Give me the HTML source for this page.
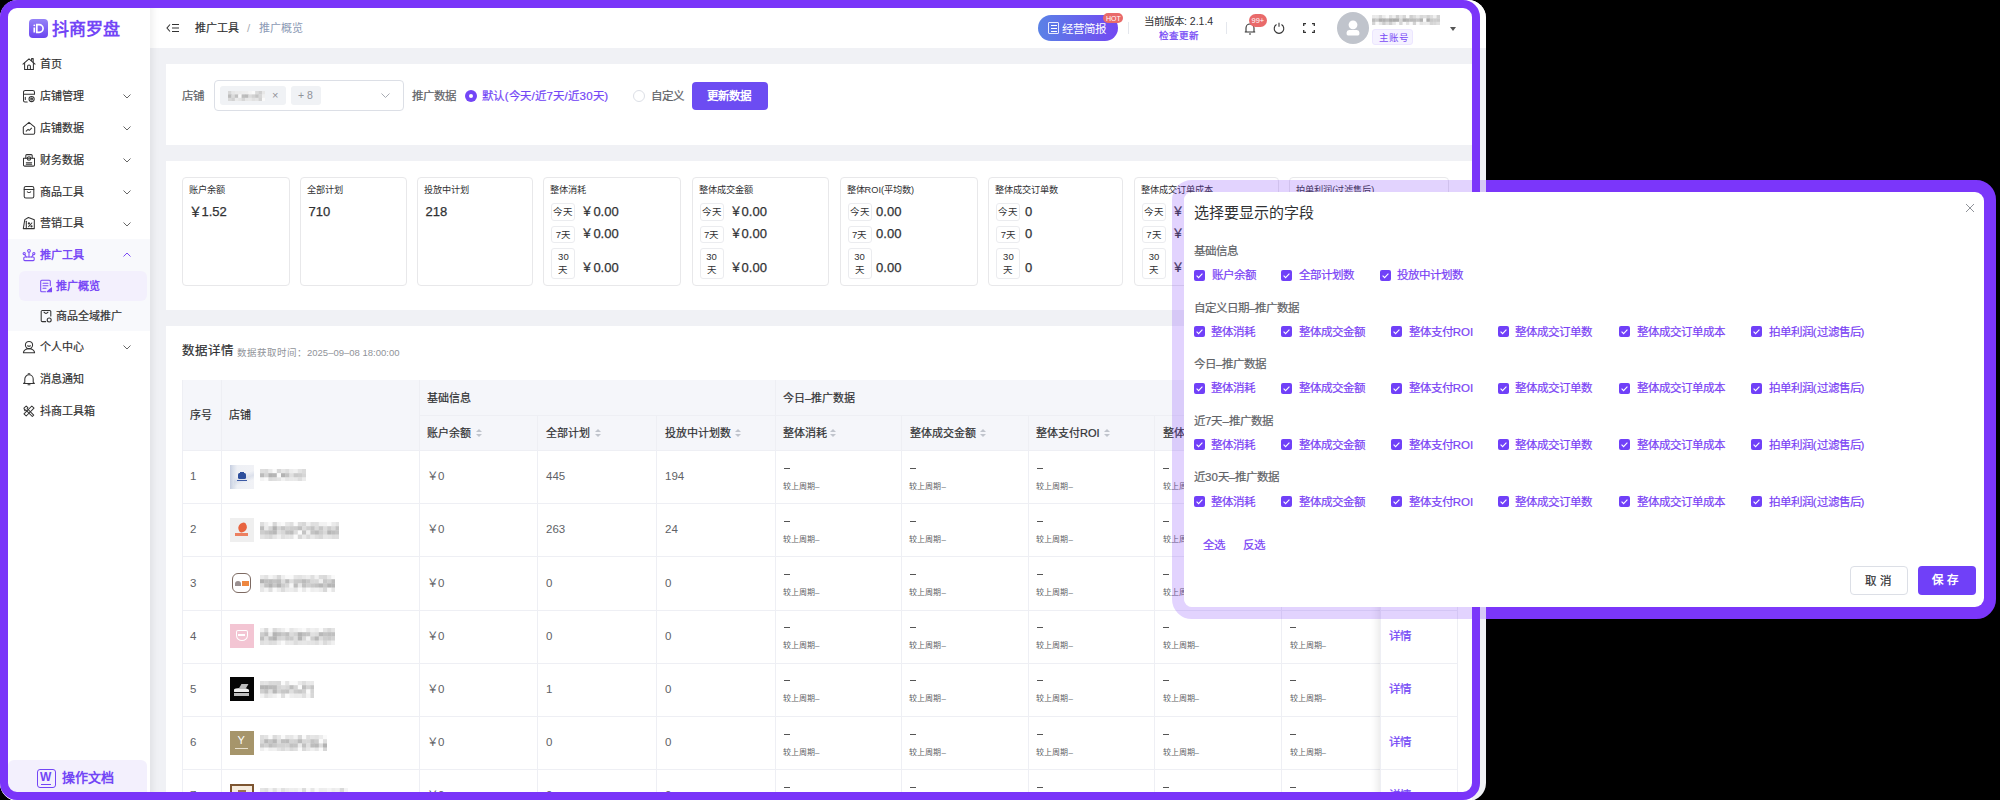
<!DOCTYPE html>
<html lang="zh-CN">
<head>
<meta charset="utf-8">
<style>
*{box-sizing:border-box;margin:0;padding:0}
html,body{width:2000px;height:800px;overflow:hidden;background:#000}
body{font-family:"Liberation Sans",sans-serif;color:#303133;font-size:12px;position:relative}
.m{-webkit-text-stroke:0.2px currentColor}
.abs{position:absolute}
#page{position:absolute;left:0;top:0;width:1486px;height:801px;background:#F0F1F5;border-radius:18px;overflow:hidden}
#side{position:absolute;left:0;top:0;width:150px;height:800px;background:#fff;box-shadow:2px 0 8px rgba(0,0,0,.08)}
#hdr{position:absolute;left:150px;top:0;width:1336px;height:48px;background:#fff}
.card{position:absolute;left:166px;width:1306px;background:#fff}
#frame{position:absolute;left:0;top:0;width:1480px;height:800px;border:8px solid #7A35F9;border-radius:17px;pointer-events:none}
.txt{position:absolute;white-space:nowrap;line-height:1}
svg{display:block}
.tb{position:absolute;left:16px;top:54px;width:1276px;height:460px;overflow:hidden}
.hd{position:absolute;background:#F5F6FA}
.vl{position:absolute;width:1px;background:#EEEFF4}
.hl{position:absolute;height:1px;background:#EEEFF4}
.th{position:absolute;font-size:11px;line-height:12px;color:#303133;-webkit-text-stroke:0.2px currentColor;white-space:nowrap}
.td{position:absolute;font-size:11.5px;line-height:12px;color:#606266;white-space:nowrap}
.dash{position:absolute;width:6px;height:1px;background:#555}
.sub{position:absolute;font-size:8px;line-height:9px;color:#606266;white-space:nowrap}
.sort{position:absolute;width:6px;height:9px}
.sort:before{content:"";position:absolute;left:0;top:0;border-left:3px solid transparent;border-right:3px solid transparent;border-bottom:3.5px solid #C0C4CC}
.sort:after{content:"";position:absolute;left:0;top:5px;border-left:3px solid transparent;border-right:3px solid transparent;border-top:3.5px solid #C0C4CC}

.box{position:absolute;top:16px;height:109px;border:1px solid #E8E8EA;border-radius:4px}
.bt{position:absolute;left:6px;top:7px;font-size:9.2px;line-height:10px;color:#303133;white-space:nowrap}
.yen{display:inline-block;width:10px;margin-right:2px;font-size:12px}
.tag{position:absolute;left:7px;width:24px;border:1px solid #EBECEF;border-radius:3px;font-size:9.5px;color:#303133;text-align:center}
.val{position:absolute;font-size:13px;line-height:14px;color:#303133;white-space:nowrap;-webkit-text-stroke:0.25px currentColor}
</style>
</head>
<body>
<div id="page">
  <div id="hdr"><div class="abs" style="left:16px;top:22px;width:14px;height:12px"><svg width="14" height="12" viewBox="0 0 14 12" fill="none" stroke="#333" stroke-width="1.1"><path d="M4 2.5L1 6l3 3.5M6 2.5h7M6 6h7M6 9.5h7"/></svg></div>
<div class="txt" style="left:45px;top:22.5px;font-size:11px;line-height:11px;color:#303133;-webkit-text-stroke:0.2px currentColor">推广工具</div>
<div class="txt" style="left:97px;top:22px;font-size:11.5px;line-height:12px;color:#A8ABB2">/</div>
<div class="txt" style="left:109px;top:22.5px;font-size:11px;line-height:11px;color:#8C9AB5">推广概览</div>
<div class="abs" style="left:888px;top:15px;width:80px;height:26px;border-radius:13px;background:linear-gradient(90deg,#5A82E6,#7348F2)"></div>
<div class="abs" style="left:898px;top:22px;width:11px;height:12px;border:1.2px solid rgba(255,255,255,.85);border-radius:1px"><div class="abs" style="left:1.5px;top:2px;width:6px;height:1px;background:#fff"></div><div class="abs" style="left:1.5px;top:5px;width:6px;height:1px;background:#fff"></div><div class="abs" style="left:1.5px;top:8px;width:6px;height:1px;background:#fff"></div></div>
<div class="txt" style="left:912px;top:22.5px;font-size:11.5px;line-height:12px;color:#fff">经营简报</div>
<div class="abs" style="left:953px;top:13px;width:20px;height:10px;border-radius:5px;background:#E96A6A"><div class="txt" style="left:3px;top:1.5px;font-size:7px;line-height:7px;color:#fff">HOT</div></div>
<div class="abs" style="left:978px;top:22px;width:1px;height:12px;background:#E4E7ED"></div>
<div class="txt" style="left:994px;top:15.5px;font-size:10.5px;line-height:11px;color:#303133">当前版本: 2.1.4</div>
<div class="txt" style="left:1009px;top:30.5px;font-size:9.5px;line-height:10px;color:#7346F6;-webkit-text-stroke:0.25px currentColor">检查更新</div>
<div class="abs" style="left:1076px;top:22px;width:1px;height:12px;background:#E4E7ED"></div>
<div class="abs" style="left:1094px;top:22px;width:12px;height:13px"><svg width="12" height="13" viewBox="0 0 12 13" fill="none" stroke="#333" stroke-width="1.1"><path d="M2 10V6a4 4 0 0 1 8 0v4M.8 10h10.4M5 12h2"/></svg></div>
<div class="abs" style="left:1099px;top:14px;width:18px;height:13px;border-radius:7px;background:#E96A6A"><div class="txt" style="left:2.5px;top:3px;font-size:7.5px;line-height:7.5px;color:#fff">99+</div></div>
<div class="abs" style="left:1123px;top:22px;width:12px;height:12px"><svg width="12" height="12" viewBox="0 0 12 12" fill="none" stroke="#333" stroke-width="1.1"><path d="M3.5 2.5a4.8 4.8 0 1 0 5 0M6 .8v4"/></svg></div>
<div class="abs" style="left:1153px;top:23px;width:12px;height:10px"><svg width="12" height="10" viewBox="0 0 12 10" fill="none" stroke="#333" stroke-width="1.3"><path d="M.7 3V.7H3M9 .7h2.3V3M11.3 7v2.3H9M3 9.3H.7V7"/></svg></div>
<div class="abs" style="left:1187px;top:11.5px;width:32px;height:32px;border-radius:50%;background:#C0C4CC"><svg width="32" height="32" viewBox="0 0 32 32" fill="#fff"><circle cx="16" cy="12.8" r="4.4"/><path d="M9.6 20.5a2.6 2.6 0 0 1 2.6-2.5h7.6a2.6 2.6 0 0 1 2.6 2.5v1.6a1.4 1.4 0 0 1-1.4 1.4H11a1.4 1.4 0 0 1-1.4-1.4z"/></svg></div>
<svg class="abs" style="left:1222.0px;top:14.5px;" width="68.0" height="10.2" viewBox="0 0 68.0 10.2"><rect x="0.0" y="0.0" width="3.7" height="3.7" fill="rgb(233,233,233)"/><rect x="3.4" y="0.0" width="3.7" height="3.7" fill="rgb(234,234,234)"/><rect x="6.8" y="0.0" width="3.7" height="3.7" fill="rgb(217,217,217)"/><rect x="10.2" y="0.0" width="3.7" height="3.7" fill="rgb(237,237,237)"/><rect x="13.6" y="0.0" width="3.7" height="3.7" fill="rgb(250,250,250)"/><rect x="17.0" y="0.0" width="3.7" height="3.7" fill="rgb(224,224,224)"/><rect x="20.4" y="0.0" width="3.7" height="3.7" fill="rgb(239,239,239)"/><rect x="23.8" y="0.0" width="3.7" height="3.7" fill="rgb(207,207,207)"/><rect x="27.2" y="0.0" width="3.7" height="3.7" fill="rgb(230,230,230)"/><rect x="30.6" y="0.0" width="3.7" height="3.7" fill="rgb(215,215,215)"/><rect x="34.0" y="0.0" width="3.7" height="3.7" fill="rgb(250,250,250)"/><rect x="37.4" y="0.0" width="3.7" height="3.7" fill="rgb(207,207,207)"/><rect x="40.8" y="0.0" width="3.7" height="3.7" fill="rgb(220,220,220)"/><rect x="44.2" y="0.0" width="3.7" height="3.7" fill="rgb(234,234,234)"/><rect x="47.6" y="0.0" width="3.7" height="3.7" fill="rgb(217,217,217)"/><rect x="51.0" y="0.0" width="3.7" height="3.7" fill="rgb(223,223,223)"/><rect x="54.4" y="0.0" width="3.7" height="3.7" fill="rgb(210,210,210)"/><rect x="57.8" y="0.0" width="3.7" height="3.7" fill="rgb(222,222,222)"/><rect x="61.2" y="0.0" width="3.7" height="3.7" fill="rgb(240,240,240)"/><rect x="64.6" y="0.0" width="3.7" height="3.7" fill="rgb(210,210,210)"/><rect x="0.0" y="3.4" width="3.7" height="3.7" fill="rgb(190,190,190)"/><rect x="3.4" y="3.4" width="3.7" height="3.7" fill="rgb(202,202,202)"/><rect x="6.8" y="3.4" width="3.7" height="3.7" fill="rgb(174,174,174)"/><rect x="10.2" y="3.4" width="3.7" height="3.7" fill="rgb(176,176,176)"/><rect x="13.6" y="3.4" width="3.7" height="3.7" fill="rgb(188,188,188)"/><rect x="17.0" y="3.4" width="3.7" height="3.7" fill="rgb(171,171,171)"/><rect x="20.4" y="3.4" width="3.7" height="3.7" fill="rgb(170,170,170)"/><rect x="23.8" y="3.4" width="3.7" height="3.7" fill="rgb(173,173,173)"/><rect x="27.2" y="3.4" width="3.7" height="3.7" fill="rgb(215,215,215)"/><rect x="30.6" y="3.4" width="3.7" height="3.7" fill="rgb(174,174,174)"/><rect x="34.0" y="3.4" width="3.7" height="3.7" fill="rgb(182,182,182)"/><rect x="37.4" y="3.4" width="3.7" height="3.7" fill="rgb(187,187,187)"/><rect x="40.8" y="3.4" width="3.7" height="3.7" fill="rgb(189,189,189)"/><rect x="44.2" y="3.4" width="3.7" height="3.7" fill="rgb(196,196,196)"/><rect x="47.6" y="3.4" width="3.7" height="3.7" fill="rgb(177,177,177)"/><rect x="51.0" y="3.4" width="3.7" height="3.7" fill="rgb(250,250,250)"/><rect x="54.4" y="3.4" width="3.7" height="3.7" fill="rgb(173,173,173)"/><rect x="57.8" y="3.4" width="3.7" height="3.7" fill="rgb(201,201,201)"/><rect x="61.2" y="3.4" width="3.7" height="3.7" fill="rgb(205,205,205)"/><rect x="64.6" y="3.4" width="3.7" height="3.7" fill="rgb(202,202,202)"/><rect x="0.0" y="6.8" width="3.7" height="3.7" fill="rgb(213,213,213)"/><rect x="3.4" y="6.8" width="3.7" height="3.7" fill="rgb(250,250,250)"/><rect x="6.8" y="6.8" width="3.7" height="3.7" fill="rgb(231,231,231)"/><rect x="10.2" y="6.8" width="3.7" height="3.7" fill="rgb(205,205,205)"/><rect x="13.6" y="6.8" width="3.7" height="3.7" fill="rgb(224,224,224)"/><rect x="17.0" y="6.8" width="3.7" height="3.7" fill="rgb(206,206,206)"/><rect x="20.4" y="6.8" width="3.7" height="3.7" fill="rgb(230,230,230)"/><rect x="23.8" y="6.8" width="3.7" height="3.7" fill="rgb(250,250,250)"/><rect x="27.2" y="6.8" width="3.7" height="3.7" fill="rgb(214,214,214)"/><rect x="30.6" y="6.8" width="3.7" height="3.7" fill="rgb(250,250,250)"/><rect x="34.0" y="6.8" width="3.7" height="3.7" fill="rgb(226,226,226)"/><rect x="37.4" y="6.8" width="3.7" height="3.7" fill="rgb(250,250,250)"/><rect x="40.8" y="6.8" width="3.7" height="3.7" fill="rgb(210,210,210)"/><rect x="44.2" y="6.8" width="3.7" height="3.7" fill="rgb(250,250,250)"/><rect x="47.6" y="6.8" width="3.7" height="3.7" fill="rgb(228,228,228)"/><rect x="51.0" y="6.8" width="3.7" height="3.7" fill="rgb(234,234,234)"/><rect x="54.4" y="6.8" width="3.7" height="3.7" fill="rgb(235,235,235)"/><rect x="57.8" y="6.8" width="3.7" height="3.7" fill="rgb(213,213,213)"/><rect x="61.2" y="6.8" width="3.7" height="3.7" fill="rgb(216,216,216)"/><rect x="64.6" y="6.8" width="3.7" height="3.7" fill="rgb(224,224,224)"/></svg>
<div class="abs" style="left:1222px;top:29px;width:41px;height:16px;border-radius:3px;background:#F5F2FF;border:1px solid #ECE6FF"><div class="txt" style="left:5.5px;top:3px;font-size:9.5px;line-height:10px;color:#7A4AF6">主账号</div></div>
<div class="abs" style="left:1300px;top:27px;width:0;height:0;border-left:3.5px solid transparent;border-right:3.5px solid transparent;border-top:4.5px solid #555"></div></div>
  <div id="side"><div class="abs" style="left:0;top:239px;width:150px;height:92px;background:#F8F9FC"></div>
<div class="abs" style="left:19px;top:271px;width:128px;height:30px;background:#F3F0FD;border-radius:6px"></div>
<div class="abs" style="left:29px;top:19px;width:19px;height:19px;border-radius:4px;background:linear-gradient(180deg,#9583F7,#6A44F0)"><svg width="19" height="19" viewBox="0 0 19 19" fill="none" stroke="#fff" stroke-width="1.7"><path d="M5.3 8.6v4.8"/><circle cx="5.3" cy="6.3" r=".9" fill="#fff" stroke="none"/><path d="M7.8 5.6h2.4a3.9 3.9 0 0 1 0 7.8H7.8z"/></svg></div>
<div class="txt" style="left:52px;top:21px;font-size:17px;line-height:17px;font-weight:700;color:#7346F6;letter-spacing:0.1px">抖商罗盘</div>
<div class="abs" style="left:22px;top:56.5px;width:14px;height:14px"><svg width="14" height="14" viewBox="0 0 14 14" fill="none" stroke="#333" color="#333" stroke-width="1.05" stroke-linecap="round" stroke-linejoin="round"><path d="M1 7.2L7 1.8l6 5.4"/><path d="M2.6 5.9v6.6h8.8V5.9"/><path d="M5.6 12.5V9.3a1.4 1.4 0 0 1 2.8 0v3.2"/><path d="M9.6 3.6V1.6h1.6v3.4"/></svg></div><div class="txt" style="left:40px;top:58.5px;font-size:11px;line-height:11px;color:#333;-webkit-text-stroke:0.2px currentColor;">首页</div>
<div class="abs" style="left:22px;top:88.5px;width:14px;height:14px"><svg width="14" height="14" viewBox="0 0 14 14" fill="none" stroke="#333" color="#333" stroke-width="1.05" stroke-linecap="round" stroke-linejoin="round"><path d="M1.5 5.2V3.2a1.8 1.8 0 0 1 1.8-1.8h7.4a1.8 1.8 0 0 1 1.8 1.8v2z"/><path d="M1.5 5.2v6.3a1.5 1.5 0 0 0 1.5 1.5h2.2M3.3 8.2v2.2"/><circle cx="9.6" cy="10" r="2.6"/><circle cx="9.6" cy="10" r="0.9"/></svg></div><div class="txt" style="left:40px;top:90.5px;font-size:11px;line-height:11px;color:#333;-webkit-text-stroke:0.2px currentColor;">店铺管理</div><div class="abs" style="left:123px;top:94px;width:8px;height:5px"><svg width="8" height="5" viewBox="0 0 8 5" fill="none" stroke="#666" stroke-width="1"><path d="M.5 .5L4 4 7.5 .5"/></svg></div>
<div class="abs" style="left:22px;top:120.5px;width:14px;height:14px"><svg width="14" height="14" viewBox="0 0 14 14" fill="none" stroke="#333" color="#333" stroke-width="1.05" stroke-linecap="round" stroke-linejoin="round"><path d="M1.3 6.2L7 1.3l5.7 4.9v5.6a1.4 1.4 0 0 1-1.4 1.4H2.7a1.4 1.4 0 0 1-1.4-1.4z"/><path d="M4.2 10.2l1.9-1.8 1.2 0.9 2.3-2.1"/></svg></div><div class="txt" style="left:40px;top:122.5px;font-size:11px;line-height:11px;color:#333;-webkit-text-stroke:0.2px currentColor;">店铺数据</div><div class="abs" style="left:123px;top:126px;width:8px;height:5px"><svg width="8" height="5" viewBox="0 0 8 5" fill="none" stroke="#666" stroke-width="1"><path d="M.5 .5L4 4 7.5 .5"/></svg></div>
<div class="abs" style="left:22px;top:152.5px;width:14px;height:14px"><svg width="14" height="14" viewBox="0 0 14 14" fill="none" stroke="#333" color="#333" stroke-width="1.05" stroke-linecap="round" stroke-linejoin="round"><path d="M1.5 5.3h11v6.6a1.2 1.2 0 0 1-1.2 1.2H2.7a1.2 1.2 0 0 1-1.2-1.2z"/><path d="M3.8 5.3V2.6a1 1 0 0 1 1-1h4.4a1 1 0 0 1 1 1v2.7"/><circle cx="7" cy="5.4" r="1.7"/><path d="M4.3 9.8h5.4M4.3 11.2h5.4"/></svg></div><div class="txt" style="left:40px;top:154.5px;font-size:11px;line-height:11px;color:#333;-webkit-text-stroke:0.2px currentColor;">财务数据</div><div class="abs" style="left:123px;top:158px;width:8px;height:5px"><svg width="8" height="5" viewBox="0 0 8 5" fill="none" stroke="#666" stroke-width="1"><path d="M.5 .5L4 4 7.5 .5"/></svg></div>
<div class="abs" style="left:22px;top:184.5px;width:14px;height:14px"><svg width="14" height="14" viewBox="0 0 14 14" fill="none" stroke="#333" color="#333" stroke-width="1.05" stroke-linecap="round" stroke-linejoin="round"><rect x="2.2" y="1.4" width="9.6" height="11.6" rx="1.6"/><path d="M2.2 4.4h9.6M5.3 6.8q1.7 1.3 3.4 0"/></svg></div><div class="txt" style="left:40px;top:186.5px;font-size:11px;line-height:11px;color:#333;-webkit-text-stroke:0.2px currentColor;">商品工具</div><div class="abs" style="left:123px;top:190px;width:8px;height:5px"><svg width="8" height="5" viewBox="0 0 8 5" fill="none" stroke="#666" stroke-width="1"><path d="M.5 .5L4 4 7.5 .5"/></svg></div>
<div class="abs" style="left:22px;top:216.0px;width:14px;height:14px"><svg width="14" height="14" viewBox="0 0 14 14" fill="none" stroke="#333" color="#333" stroke-width="1.05" stroke-linecap="round" stroke-linejoin="round"><path d="M1.3 12.6l1.5-9 3.6-2.1 5.9 2.3v8.8z"/><path d="M4.3 12.6V5.2"/><path d="M6.6 10.6l3.2-3.6"/><circle cx="6.9" cy="7.4" r=".6"/><circle cx="9.5" cy="10.3" r=".6"/></svg></div><div class="txt" style="left:40px;top:218.0px;font-size:11px;line-height:11px;color:#333;-webkit-text-stroke:0.2px currentColor;">营销工具</div><div class="abs" style="left:123px;top:221.5px;width:8px;height:5px"><svg width="8" height="5" viewBox="0 0 8 5" fill="none" stroke="#666" stroke-width="1"><path d="M.5 .5L4 4 7.5 .5"/></svg></div>
<div class="abs" style="left:22px;top:247.5px;width:14px;height:14px"><svg width="14" height="14" viewBox="0 0 14 14" fill="none" stroke="#7A4AF6" color="#7A4AF6" stroke-width="1.05" stroke-linecap="round" stroke-linejoin="round"><rect x="1.8" y="9" width="10.4" height="3.6" rx="1"/><path d="M7 9V4.2M4.3 9L2.8 6.6M9.7 9l1.5-2.4"/><circle cx="7" cy="2.8" r="1.4"/><circle cx="2.2" cy="5.6" r="1.1"/><circle cx="11.8" cy="5.6" r="1.1"/></svg></div><div class="txt" style="left:40px;top:249.5px;font-size:11px;line-height:11px;color:#7A4AF6;font-weight:700;">推广工具</div><div class="abs" style="left:123px;top:252px;width:8px;height:5px"><svg width="8" height="5" viewBox="0 0 8 5" fill="none" stroke="#7A4AF6" stroke-width="1"><path d="M.5 4.5L4 1 7.5 4.5"/></svg></div>
<div class="abs" style="left:39px;top:278.5px;width:14px;height:14px"><svg width="14" height="14" viewBox="0 0 14 14" fill="none" stroke="#7A4AF6" color="#7A4AF6" stroke-width="1.05" stroke-linecap="round" stroke-linejoin="round"><path d="M11.3 6.8V2.3a1 1 0 0 0-1-1H2.7a1 1 0 0 0-1 1v9.4a1 1 0 0 0 1 1H6.5"/><path d="M4 4.3h5M4 6.8h5M4 9.3h3"/><path d="M8.2 12.7l4.3-3.8v3.8z" fill="currentColor"/></svg></div><div class="txt" style="left:55.5px;top:280.5px;font-size:11px;line-height:11px;color:#7A4AF6;font-weight:700;">推广概览</div>
<div class="abs" style="left:39px;top:308.5px;width:14px;height:14px"><svg width="14" height="14" viewBox="0 0 14 14" fill="none" stroke="#333" color="#333" stroke-width="1.05" stroke-linecap="round" stroke-linejoin="round"><path d="M11.8 7V2.6a1.2 1.2 0 0 0-1.2-1.2H3.4a1.2 1.2 0 0 0-1.2 1.2v8.8a1.2 1.2 0 0 0 1.2 1.2h3.3"/><path d="M5 3.2q2 2.4 4 0"/><circle cx="10.2" cy="11" r="2"/></svg></div><div class="txt" style="left:55.5px;top:310.5px;font-size:11px;line-height:11px;color:#333;-webkit-text-stroke:0.2px currentColor;">商品全域推广</div>
<div class="abs" style="left:22px;top:339.5px;width:14px;height:14px"><svg width="14" height="14" viewBox="0 0 14 14" fill="none" stroke="#333" color="#333" stroke-width="1.05" stroke-linecap="round" stroke-linejoin="round"><circle cx="7" cy="5" r="3.6"/><path d="M1.4 12.8a5.6 4.2 0 0 1 11.2 0z"/><path d="M5.6 5.8q1.4 1 2.8 0"/></svg></div><div class="txt" style="left:40px;top:341.5px;font-size:11px;line-height:11px;color:#333;-webkit-text-stroke:0.2px currentColor;">个人中心</div><div class="abs" style="left:123px;top:345px;width:8px;height:5px"><svg width="8" height="5" viewBox="0 0 8 5" fill="none" stroke="#666" stroke-width="1"><path d="M.5 .5L4 4 7.5 .5"/></svg></div>
<div class="abs" style="left:22px;top:371.5px;width:14px;height:14px"><svg width="14" height="14" viewBox="0 0 14 14" fill="none" stroke="#333" color="#333" stroke-width="1.05" stroke-linecap="round" stroke-linejoin="round"><path d="M2.8 10.4V7a4.2 4.2 0 0 1 8.4 0v3.4l1.2 1H1.6z"/><path d="M6.2 1.8h1.6M6 12.8h2"/></svg></div><div class="txt" style="left:40px;top:373.5px;font-size:11px;line-height:11px;color:#333;-webkit-text-stroke:0.2px currentColor;">消息通知</div>
<div class="abs" style="left:22px;top:403.5px;width:14px;height:14px"><svg width="14" height="14" viewBox="0 0 14 14" fill="none" stroke="#333" color="#333" stroke-width="1.05" stroke-linecap="round" stroke-linejoin="round"><path d="M2 4.2l2.2-2.2 1.7 1.7-.8.8 6.6 6.6-1.4 1.4-6.6-6.6-.8.8z"/><path d="M12 4.2L9.8 2 2 9.8l2.2 2.2z"/></svg></div><div class="txt" style="left:40px;top:405.5px;font-size:11px;line-height:11px;color:#333;-webkit-text-stroke:0.2px currentColor;">抖商工具箱</div>
<div class="abs" style="left:8px;top:760px;width:139px;height:40px;background:#F3F0FD;border-radius:6px"></div>
<div class="abs" style="left:37px;top:769px;width:19px;height:19px;border:1.6px solid #7346F6;border-radius:3px"><div class="txt" style="left:2px;top:1px;font-size:12px;line-height:12px;font-weight:700;color:#7346F6">W</div><div class="abs" style="left:3px;top:13.5px;width:10px;height:1.4px;background:#7346F6"></div></div>
<div class="txt" style="left:62px;top:771px;font-size:13px;line-height:13px;font-weight:700;color:#7346F6">操作文档</div></div><!--sideend-->
  <div class="card" style="top:64px;height:81px"><div class="txt" style="left:16px;top:26px;font-size:11.5px;line-height:12px;color:#606266;-webkit-text-stroke:0.2px currentColor">店铺</div>
<div class="abs" style="left:48px;top:16px;width:190px;height:31px;border:1px solid #DCDFE6;border-radius:4px"></div>
<div class="abs" style="left:54px;top:22px;width:66px;height:19px;background:#F0F2F5;border-radius:3px"><svg class="abs" style="left:8.0px;top:4.5px;" width="37.4" height="10.2" viewBox="0 0 37.4 10.2"><rect x="0.0" y="0.0" width="3.7" height="3.7" fill="rgb(215,215,215)"/><rect x="3.4" y="0.0" width="3.7" height="3.7" fill="rgb(231,231,231)"/><rect x="6.8" y="0.0" width="3.7" height="3.7" fill="rgb(235,235,235)"/><rect x="10.2" y="0.0" width="3.7" height="3.7" fill="rgb(235,235,235)"/><rect x="13.6" y="0.0" width="3.7" height="3.7" fill="rgb(237,237,237)"/><rect x="17.0" y="0.0" width="3.7" height="3.7" fill="rgb(238,238,238)"/><rect x="20.4" y="0.0" width="3.7" height="3.7" fill="rgb(245,245,245)"/><rect x="23.8" y="0.0" width="3.7" height="3.7" fill="rgb(250,250,250)"/><rect x="27.2" y="0.0" width="3.7" height="3.7" fill="rgb(219,219,219)"/><rect x="30.6" y="0.0" width="3.7" height="3.7" fill="rgb(207,207,207)"/><rect x="34.0" y="0.0" width="3.7" height="3.7" fill="rgb(231,231,231)"/><rect x="0.0" y="3.4" width="3.7" height="3.7" fill="rgb(187,187,187)"/><rect x="3.4" y="3.4" width="3.7" height="3.7" fill="rgb(219,219,219)"/><rect x="6.8" y="3.4" width="3.7" height="3.7" fill="rgb(192,192,192)"/><rect x="10.2" y="3.4" width="3.7" height="3.7" fill="rgb(248,248,248)"/><rect x="13.6" y="3.4" width="3.7" height="3.7" fill="rgb(190,190,190)"/><rect x="17.0" y="3.4" width="3.7" height="3.7" fill="rgb(186,186,186)"/><rect x="20.4" y="3.4" width="3.7" height="3.7" fill="rgb(220,220,220)"/><rect x="23.8" y="3.4" width="3.7" height="3.7" fill="rgb(210,210,210)"/><rect x="27.2" y="3.4" width="3.7" height="3.7" fill="rgb(196,196,196)"/><rect x="30.6" y="3.4" width="3.7" height="3.7" fill="rgb(215,215,215)"/><rect x="34.0" y="3.4" width="3.7" height="3.7" fill="rgb(240,240,240)"/><rect x="0.0" y="6.8" width="3.7" height="3.7" fill="rgb(217,217,217)"/><rect x="3.4" y="6.8" width="3.7" height="3.7" fill="rgb(209,209,209)"/><rect x="6.8" y="6.8" width="3.7" height="3.7" fill="rgb(235,235,235)"/><rect x="10.2" y="6.8" width="3.7" height="3.7" fill="rgb(229,229,229)"/><rect x="13.6" y="6.8" width="3.7" height="3.7" fill="rgb(214,214,214)"/><rect x="17.0" y="6.8" width="3.7" height="3.7" fill="rgb(231,231,231)"/><rect x="20.4" y="6.8" width="3.7" height="3.7" fill="rgb(233,233,233)"/><rect x="23.8" y="6.8" width="3.7" height="3.7" fill="rgb(225,225,225)"/><rect x="27.2" y="6.8" width="3.7" height="3.7" fill="rgb(229,229,229)"/><rect x="30.6" y="6.8" width="3.7" height="3.7" fill="rgb(210,210,210)"/><rect x="34.0" y="6.8" width="3.7" height="3.7" fill="rgb(250,250,250)"/></svg><div class="txt" style="left:52px;top:4px;font-size:11px;line-height:11px;color:#909399">×</div></div>
<div class="abs" style="left:125px;top:22px;width:30px;height:19px;background:#F0F2F5;border-radius:3px"><div class="txt" style="left:7px;top:4px;font-size:10.5px;line-height:11px;color:#909399">+ 8</div></div>
<div class="abs" style="left:215px;top:29px;width:9px;height:5px"><svg width="9" height="5" viewBox="0 0 9 5" fill="none" stroke="#A8ABB2" stroke-width="1"><path d="M.5 .5L4.5 4.5 8.5 .5"/></svg></div>
<div class="txt" style="left:246px;top:26px;font-size:11.5px;line-height:12px;color:#606266;-webkit-text-stroke:0.2px currentColor">推广数据</div>
<div class="abs" style="left:299px;top:26px;width:12px;height:12px;border-radius:50%;background:#7346F6"><div class="abs" style="left:4px;top:4px;width:4px;height:4px;border-radius:50%;background:#fff"></div></div>
<div class="txt" style="left:316px;top:26px;font-size:11.5px;line-height:12px;color:#7346F6;letter-spacing:0.35px;-webkit-text-stroke:0.2px currentColor">默认(今天/近7天/近30天)</div>
<div class="abs" style="left:467px;top:26px;width:12px;height:12px;border-radius:50%;border:1px solid #DCDFE6"></div>
<div class="txt" style="left:485px;top:26px;font-size:11.5px;line-height:12px;color:#606266;-webkit-text-stroke:0.2px currentColor">自定义</div>
<div class="abs" style="left:525.5px;top:17.5px;width:76px;height:28.5px;background:#6C4CF2;border-radius:4px"><div class="txt" style="left:15px;top:8.5px;font-size:11.5px;line-height:12px;color:#fff;font-weight:700">更新数据</div></div></div>
  <div class="card" id="c2" style="top:161px;height:149px"><div class="box" style="left:16.0px;width:107.6px"><div class="bt">账户余额</div><div class="val" style="left:5.5px;top:26.5px"><span style="font-family:'Liberation Sans',sans-serif">￥</span>1.52</div></div>
<div class="box" style="left:133.5px;width:107.1px"><div class="bt">全部计划</div><div class="val" style="left:8px;top:26.5px">710</div></div>
<div class="box" style="left:250.5px;width:116.5px"><div class="bt">投放中计划</div><div class="val" style="left:8px;top:26.5px">218</div></div>
<div class="box" style="left:377.4px;width:138.0px"><div class="bt">整体消耗</div><div class="tag" style="top:25.3px;height:17.5px;line-height:15.5px">今天</div><div class="tag" style="top:47.8px;height:17.5px;line-height:15.5px">7天</div><div class="tag" style="top:69.5px;height:31px;line-height:13px;padding-top:1.5px">30<br>天</div><div class="val" style="left:37px;top:27px"><span class="yen">￥</span>0.00</div><div class="val" style="left:37px;top:49.3px"><span class="yen">￥</span>0.00</div><div class="val" style="left:37px;top:83px"><span class="yen">￥</span>0.00</div></div>
<div class="box" style="left:525.6px;width:137.4px"><div class="bt">整体成交金额</div><div class="tag" style="top:25.3px;height:17.5px;line-height:15.5px">今天</div><div class="tag" style="top:47.8px;height:17.5px;line-height:15.5px">7天</div><div class="tag" style="top:69.5px;height:31px;line-height:13px;padding-top:1.5px">30<br>天</div><div class="val" style="left:37px;top:27px"><span class="yen">￥</span>0.00</div><div class="val" style="left:37px;top:49.3px"><span class="yen">￥</span>0.00</div><div class="val" style="left:37px;top:83px"><span class="yen">￥</span>0.00</div></div>
<div class="box" style="left:673.6px;width:138.3px"><div class="bt">整体ROI(平均数)</div><div class="tag" style="top:25.3px;height:17.5px;line-height:15.5px">今天</div><div class="tag" style="top:47.8px;height:17.5px;line-height:15.5px">7天</div><div class="tag" style="top:69.5px;height:31px;line-height:13px;padding-top:1.5px">30<br>天</div><div class="val" style="left:35.5px;top:27px">0.00</div><div class="val" style="left:35.5px;top:49.3px">0.00</div><div class="val" style="left:35.5px;top:83px">0.00</div></div>
<div class="box" style="left:822.4px;width:135.1px"><div class="bt">整体成交订单数</div><div class="tag" style="top:25.3px;height:17.5px;line-height:15.5px">今天</div><div class="tag" style="top:47.8px;height:17.5px;line-height:15.5px">7天</div><div class="tag" style="top:69.5px;height:31px;line-height:13px;padding-top:1.5px">30<br>天</div><div class="val" style="left:35.5px;top:27px">0</div><div class="val" style="left:35.5px;top:49.3px">0</div><div class="val" style="left:35.5px;top:83px">0</div></div>
<div class="box" style="left:968.0px;width:145.0px"><div class="bt">整体成交订单成本</div><div class="tag" style="top:25.3px;height:17.5px;line-height:15.5px">今天</div><div class="tag" style="top:47.8px;height:17.5px;line-height:15.5px">7天</div><div class="tag" style="top:69.5px;height:31px;line-height:13px;padding-top:1.5px">30<br>天</div><div class="val" style="left:37px;top:27px"><span class="yen">￥</span>0.00</div><div class="val" style="left:37px;top:49.3px"><span class="yen">￥</span>0.00</div><div class="val" style="left:37px;top:83px"><span class="yen">￥</span>0.00</div></div>
<div class="box" style="left:1123.3px;width:160.0px"><div class="bt">拍单利润(过滤售后)</div><div class="tag" style="top:25.3px;height:17.5px;line-height:15.5px">今天</div><div class="tag" style="top:47.8px;height:17.5px;line-height:15.5px">7天</div><div class="tag" style="top:69.5px;height:31px;line-height:13px;padding-top:1.5px">30<br>天</div><div class="val" style="left:37px;top:27px"><span class="yen">￥</span>0.00</div><div class="val" style="left:37px;top:49.3px"><span class="yen">￥</span>0.00</div><div class="val" style="left:37px;top:83px"><span class="yen">￥</span>0.00</div></div></div><!--c2end-->

<div class="card" id="c3" style="top:326px;height:500px"><div class="txt" style="left:16px;top:19px;font-size:12.5px;line-height:13px;color:#303133;-webkit-text-stroke:0.2px currentColor">数据详情</div>
<div class="txt" style="left:71px;top:21.5px;font-size:9.5px;line-height:10px;color:#909399">数据获取时间：2025–09–08 18:00:00</div>
<div class="tb"><div class="hd" style="left:0;top:0;width:1276px;height:70px"></div>
<div class="vl" style="left:39.0px;top:0px;height:500px"></div>
<div class="vl" style="left:237.0px;top:0px;height:500px"></div>
<div class="vl" style="left:355.0px;top:35px;height:465px"></div>
<div class="vl" style="left:474.0px;top:35px;height:465px"></div>
<div class="vl" style="left:593.0px;top:0px;height:500px"></div>
<div class="vl" style="left:719.0px;top:35px;height:465px"></div>
<div class="vl" style="left:846.0px;top:35px;height:465px"></div>
<div class="vl" style="left:972.0px;top:35px;height:465px"></div>
<div class="vl" style="left:1099.0px;top:35px;height:465px"></div>
<div class="vl" style="left:1197.5px;top:35px;height:465px"></div>
<div class="vl" style="left:0;top:0;height:500px"></div>
<div class="hl" style="left:237.0px;top:35px;width:1039.0px"></div>
<div class="hl" style="left:0;top:70.0px;width:1276.0px"></div>
<div class="hl" style="left:0;top:123.2px;width:1276.0px"></div>
<div class="hl" style="left:0;top:176.4px;width:1276.0px"></div>
<div class="hl" style="left:0;top:229.6px;width:1276.0px"></div>
<div class="hl" style="left:0;top:282.8px;width:1276.0px"></div>
<div class="hl" style="left:0;top:336.0px;width:1276.0px"></div>
<div class="hl" style="left:0;top:389.2px;width:1276.0px"></div>
<div class="hl" style="left:0;top:442.4px;width:1276.0px"></div>
<div class="th" style="left:8.0px;top:29.0px">序号</div>
<div class="th" style="left:47.0px;top:29.0px">店铺</div>
<div class="th" style="left:245.0px;top:11.5px">基础信息</div>
<div class="th" style="left:601.0px;top:11.5px">今日–推广数据</div>
<div class="th" style="left:245.0px;top:46.5px">账户余额</div><div class="sort" style="left:294.0px;top:49.0px"></div>
<div class="th" style="left:364.0px;top:46.5px">全部计划</div><div class="sort" style="left:412.6px;top:49.0px"></div>
<div class="th" style="left:483.0px;top:46.5px">投放中计划数</div><div class="sort" style="left:553.0px;top:49.0px"></div>
<div class="th" style="left:601.0px;top:46.5px">整体消耗</div><div class="sort" style="left:648.0px;top:49.0px"></div>
<div class="th" style="left:728.0px;top:46.5px">整体成交金额</div><div class="sort" style="left:798.0px;top:49.0px"></div>
<div class="th" style="left:854.0px;top:46.5px">整体支付ROI</div><div class="sort" style="left:922.0px;top:49.0px"></div>
<div class="th" style="left:981.0px;top:46.5px">整体成交订单数</div><div class="sort" style="left:1051.0px;top:49.0px"></div>
<div class="th" style="left:1108.0px;top:46.5px">整体成交订单成本</div><div class="sort" style="left:1188.0px;top:49.0px"></div>
<div class="td" style="left:8px;top:90.1px">1</div>
<div class="abs" style="left:47.5px;top:84.6px;width:24px;height:24px;overflow:hidden"><div style="position:absolute;inset:0;background:linear-gradient(90deg,#c5cde0 0,#d9dfea 12%,#eef0f5 30%,#f1f2f6);"></div><div style="position:absolute;left:4px;top:0;width:20px;height:24px;background:linear-gradient(160deg,transparent 40%,rgba(200,208,225,.5) 55%,transparent 70%)"></div><div style="position:absolute;left:8.5px;top:8.5px;width:7.5px;height:5.5px;background:#2E4F9C;border-radius:1.5px"></div><div style="position:absolute;left:10.5px;top:7.3px;width:3.5px;height:1.5px;border:1px solid #2E4F9C;border-bottom:0"></div><div style="position:absolute;left:7.5px;top:15px;width:9.5px;height:1.6px;background:#3c5aa5"></div></div>
<svg class="abs" style="left:77.5px;top:88.6px;filter:blur(0.7px)" width="46.2" height="12.6" viewBox="0 0 46.2 12.6"><rect x="0.0" y="0.0" width="4.5" height="4.5" fill="rgb(222,222,222)"/><rect x="4.2" y="0.0" width="4.5" height="4.5" fill="rgb(219,219,219)"/><rect x="8.4" y="0.0" width="4.5" height="4.5" fill="rgb(234,234,234)"/><rect x="12.6" y="0.0" width="4.5" height="4.5" fill="rgb(250,250,250)"/><rect x="16.8" y="0.0" width="4.5" height="4.5" fill="rgb(215,215,215)"/><rect x="21.0" y="0.0" width="4.5" height="4.5" fill="rgb(230,230,230)"/><rect x="25.2" y="0.0" width="4.5" height="4.5" fill="rgb(222,222,222)"/><rect x="29.4" y="0.0" width="4.5" height="4.5" fill="rgb(237,237,237)"/><rect x="33.6" y="0.0" width="4.5" height="4.5" fill="rgb(241,241,241)"/><rect x="37.8" y="0.0" width="4.5" height="4.5" fill="rgb(227,227,227)"/><rect x="42.0" y="0.0" width="4.5" height="4.5" fill="rgb(219,219,219)"/><rect x="0.0" y="4.2" width="4.5" height="4.5" fill="rgb(187,187,187)"/><rect x="4.2" y="4.2" width="4.5" height="4.5" fill="rgb(211,211,211)"/><rect x="8.4" y="4.2" width="4.5" height="4.5" fill="rgb(178,178,178)"/><rect x="12.6" y="4.2" width="4.5" height="4.5" fill="rgb(182,182,182)"/><rect x="16.8" y="4.2" width="4.5" height="4.5" fill="rgb(250,250,250)"/><rect x="21.0" y="4.2" width="4.5" height="4.5" fill="rgb(179,179,179)"/><rect x="25.2" y="4.2" width="4.5" height="4.5" fill="rgb(195,195,195)"/><rect x="29.4" y="4.2" width="4.5" height="4.5" fill="rgb(224,224,224)"/><rect x="33.6" y="4.2" width="4.5" height="4.5" fill="rgb(202,202,202)"/><rect x="37.8" y="4.2" width="4.5" height="4.5" fill="rgb(205,205,205)"/><rect x="42.0" y="4.2" width="4.5" height="4.5" fill="rgb(214,214,214)"/><rect x="0.0" y="8.4" width="4.5" height="4.5" fill="rgb(244,244,244)"/><rect x="4.2" y="8.4" width="4.5" height="4.5" fill="rgb(250,250,250)"/><rect x="8.4" y="8.4" width="4.5" height="4.5" fill="rgb(219,219,219)"/><rect x="12.6" y="8.4" width="4.5" height="4.5" fill="rgb(223,223,223)"/><rect x="16.8" y="8.4" width="4.5" height="4.5" fill="rgb(228,228,228)"/><rect x="21.0" y="8.4" width="4.5" height="4.5" fill="rgb(242,242,242)"/><rect x="25.2" y="8.4" width="4.5" height="4.5" fill="rgb(231,231,231)"/><rect x="29.4" y="8.4" width="4.5" height="4.5" fill="rgb(233,233,233)"/><rect x="33.6" y="8.4" width="4.5" height="4.5" fill="rgb(233,233,233)"/><rect x="37.8" y="8.4" width="4.5" height="4.5" fill="rgb(222,222,222)"/><rect x="42.0" y="8.4" width="4.5" height="4.5" fill="rgb(236,236,236)"/></svg>
<div class="td" style="left:245px;top:90.1px">￥0</div>
<div class="td" style="left:364px;top:90.1px">445</div>
<div class="td" style="left:483px;top:90.1px">194</div>
<div class="dash" style="left:601.5px;top:87.5px"></div>
<div class="sub" style="left:601.0px;top:101.5px">较上周期–</div>
<div class="dash" style="left:727.9px;top:87.5px"></div>
<div class="sub" style="left:727.4px;top:101.5px">较上周期–</div>
<div class="dash" style="left:854.9px;top:87.5px"></div>
<div class="sub" style="left:854.4px;top:101.5px">较上周期–</div>
<div class="dash" style="left:981.0px;top:87.5px"></div>
<div class="sub" style="left:980.5px;top:101.5px">较上周期–</div>
<div class="dash" style="left:1108.0px;top:87.5px"></div>
<div class="sub" style="left:1107.5px;top:101.5px">较上周期–</div>
<div class="td" style="left:8px;top:143.3px">2</div>
<div class="abs" style="left:47.5px;top:137.8px;width:24px;height:24px;overflow:hidden"><div style="position:absolute;inset:0;background:#EFEFEF"></div><div style="position:absolute;left:8px;top:5.5px;width:9px;height:8.5px;background:#E8643F;border-radius:60% 40% 60% 30%;transform:rotate(-20deg)"></div><div style="position:absolute;left:5.5px;top:15.5px;width:13px;height:3px;background:#EC8060"></div></div>
<svg class="abs" style="left:77.5px;top:141.8px;filter:blur(0.7px)" width="79.8" height="16.8" viewBox="0 0 79.8 16.8"><rect x="0.0" y="0.0" width="4.5" height="4.5" fill="rgb(222,222,222)"/><rect x="4.2" y="0.0" width="4.5" height="4.5" fill="rgb(238,238,238)"/><rect x="8.4" y="0.0" width="4.5" height="4.5" fill="rgb(250,250,250)"/><rect x="12.6" y="0.0" width="4.5" height="4.5" fill="rgb(215,215,215)"/><rect x="16.8" y="0.0" width="4.5" height="4.5" fill="rgb(244,244,244)"/><rect x="21.0" y="0.0" width="4.5" height="4.5" fill="rgb(250,250,250)"/><rect x="25.2" y="0.0" width="4.5" height="4.5" fill="rgb(231,231,231)"/><rect x="29.4" y="0.0" width="4.5" height="4.5" fill="rgb(223,223,223)"/><rect x="33.6" y="0.0" width="4.5" height="4.5" fill="rgb(250,250,250)"/><rect x="37.8" y="0.0" width="4.5" height="4.5" fill="rgb(221,221,221)"/><rect x="42.0" y="0.0" width="4.5" height="4.5" fill="rgb(215,215,215)"/><rect x="46.2" y="0.0" width="4.5" height="4.5" fill="rgb(240,240,240)"/><rect x="50.4" y="0.0" width="4.5" height="4.5" fill="rgb(223,223,223)"/><rect x="54.6" y="0.0" width="4.5" height="4.5" fill="rgb(224,224,224)"/><rect x="58.8" y="0.0" width="4.5" height="4.5" fill="rgb(242,242,242)"/><rect x="63.0" y="0.0" width="4.5" height="4.5" fill="rgb(242,242,242)"/><rect x="67.2" y="0.0" width="4.5" height="4.5" fill="rgb(250,250,250)"/><rect x="71.4" y="0.0" width="4.5" height="4.5" fill="rgb(234,234,234)"/><rect x="75.6" y="0.0" width="4.5" height="4.5" fill="rgb(227,227,227)"/><rect x="0.0" y="4.2" width="4.5" height="4.5" fill="rgb(189,189,189)"/><rect x="4.2" y="4.2" width="4.5" height="4.5" fill="rgb(235,235,235)"/><rect x="8.4" y="4.2" width="4.5" height="4.5" fill="rgb(213,213,213)"/><rect x="12.6" y="4.2" width="4.5" height="4.5" fill="rgb(178,178,178)"/><rect x="16.8" y="4.2" width="4.5" height="4.5" fill="rgb(214,214,214)"/><rect x="21.0" y="4.2" width="4.5" height="4.5" fill="rgb(197,197,197)"/><rect x="25.2" y="4.2" width="4.5" height="4.5" fill="rgb(210,210,210)"/><rect x="29.4" y="4.2" width="4.5" height="4.5" fill="rgb(205,205,205)"/><rect x="33.6" y="4.2" width="4.5" height="4.5" fill="rgb(205,205,205)"/><rect x="37.8" y="4.2" width="4.5" height="4.5" fill="rgb(192,192,192)"/><rect x="42.0" y="4.2" width="4.5" height="4.5" fill="rgb(220,220,220)"/><rect x="46.2" y="4.2" width="4.5" height="4.5" fill="rgb(207,207,207)"/><rect x="50.4" y="4.2" width="4.5" height="4.5" fill="rgb(195,195,195)"/><rect x="54.6" y="4.2" width="4.5" height="4.5" fill="rgb(219,219,219)"/><rect x="58.8" y="4.2" width="4.5" height="4.5" fill="rgb(199,199,199)"/><rect x="63.0" y="4.2" width="4.5" height="4.5" fill="rgb(221,221,221)"/><rect x="67.2" y="4.2" width="4.5" height="4.5" fill="rgb(204,204,204)"/><rect x="71.4" y="4.2" width="4.5" height="4.5" fill="rgb(218,218,218)"/><rect x="75.6" y="4.2" width="4.5" height="4.5" fill="rgb(195,195,195)"/><rect x="0.0" y="8.4" width="4.5" height="4.5" fill="rgb(205,205,205)"/><rect x="4.2" y="8.4" width="4.5" height="4.5" fill="rgb(198,198,198)"/><rect x="8.4" y="8.4" width="4.5" height="4.5" fill="rgb(190,190,190)"/><rect x="12.6" y="8.4" width="4.5" height="4.5" fill="rgb(184,184,184)"/><rect x="16.8" y="8.4" width="4.5" height="4.5" fill="rgb(223,223,223)"/><rect x="21.0" y="8.4" width="4.5" height="4.5" fill="rgb(215,215,215)"/><rect x="25.2" y="8.4" width="4.5" height="4.5" fill="rgb(193,193,193)"/><rect x="29.4" y="8.4" width="4.5" height="4.5" fill="rgb(189,189,189)"/><rect x="33.6" y="8.4" width="4.5" height="4.5" fill="rgb(219,219,219)"/><rect x="37.8" y="8.4" width="4.5" height="4.5" fill="rgb(250,250,250)"/><rect x="42.0" y="8.4" width="4.5" height="4.5" fill="rgb(196,196,196)"/><rect x="46.2" y="8.4" width="4.5" height="4.5" fill="rgb(238,238,238)"/><rect x="50.4" y="8.4" width="4.5" height="4.5" fill="rgb(196,196,196)"/><rect x="54.6" y="8.4" width="4.5" height="4.5" fill="rgb(187,187,187)"/><rect x="58.8" y="8.4" width="4.5" height="4.5" fill="rgb(204,204,204)"/><rect x="63.0" y="8.4" width="4.5" height="4.5" fill="rgb(217,217,217)"/><rect x="67.2" y="8.4" width="4.5" height="4.5" fill="rgb(182,182,182)"/><rect x="71.4" y="8.4" width="4.5" height="4.5" fill="rgb(190,190,190)"/><rect x="75.6" y="8.4" width="4.5" height="4.5" fill="rgb(196,196,196)"/><rect x="0.0" y="12.6" width="4.5" height="4.5" fill="rgb(227,227,227)"/><rect x="4.2" y="12.6" width="4.5" height="4.5" fill="rgb(220,220,220)"/><rect x="8.4" y="12.6" width="4.5" height="4.5" fill="rgb(215,215,215)"/><rect x="12.6" y="12.6" width="4.5" height="4.5" fill="rgb(229,229,229)"/><rect x="16.8" y="12.6" width="4.5" height="4.5" fill="rgb(240,240,240)"/><rect x="21.0" y="12.6" width="4.5" height="4.5" fill="rgb(224,224,224)"/><rect x="25.2" y="12.6" width="4.5" height="4.5" fill="rgb(229,229,229)"/><rect x="29.4" y="12.6" width="4.5" height="4.5" fill="rgb(228,228,228)"/><rect x="33.6" y="12.6" width="4.5" height="4.5" fill="rgb(250,250,250)"/><rect x="37.8" y="12.6" width="4.5" height="4.5" fill="rgb(216,216,216)"/><rect x="42.0" y="12.6" width="4.5" height="4.5" fill="rgb(234,234,234)"/><rect x="46.2" y="12.6" width="4.5" height="4.5" fill="rgb(219,219,219)"/><rect x="50.4" y="12.6" width="4.5" height="4.5" fill="rgb(232,232,232)"/><rect x="54.6" y="12.6" width="4.5" height="4.5" fill="rgb(222,222,222)"/><rect x="58.8" y="12.6" width="4.5" height="4.5" fill="rgb(216,216,216)"/><rect x="63.0" y="12.6" width="4.5" height="4.5" fill="rgb(231,231,231)"/><rect x="67.2" y="12.6" width="4.5" height="4.5" fill="rgb(228,228,228)"/><rect x="71.4" y="12.6" width="4.5" height="4.5" fill="rgb(221,221,221)"/><rect x="75.6" y="12.6" width="4.5" height="4.5" fill="rgb(222,222,222)"/></svg>
<div class="td" style="left:245px;top:143.3px">￥0</div>
<div class="td" style="left:364px;top:143.3px">263</div>
<div class="td" style="left:483px;top:143.3px">24</div>
<div class="dash" style="left:601.5px;top:140.7px"></div>
<div class="sub" style="left:601.0px;top:154.7px">较上周期–</div>
<div class="dash" style="left:727.9px;top:140.7px"></div>
<div class="sub" style="left:727.4px;top:154.7px">较上周期–</div>
<div class="dash" style="left:854.9px;top:140.7px"></div>
<div class="sub" style="left:854.4px;top:154.7px">较上周期–</div>
<div class="dash" style="left:981.0px;top:140.7px"></div>
<div class="sub" style="left:980.5px;top:154.7px">较上周期–</div>
<div class="dash" style="left:1108.0px;top:140.7px"></div>
<div class="sub" style="left:1107.5px;top:154.7px">较上周期–</div>
<div class="td" style="left:8px;top:196.5px">3</div>
<div class="abs" style="left:47.5px;top:191.0px;width:24px;height:24px;overflow:hidden"><div style="position:absolute;left:2.3px;top:2.3px;width:19.5px;height:19.5px;border:1.3px solid #7d6a62;border-radius:6px;background:#fff"></div><div style="position:absolute;left:12.5px;top:10px;width:7px;height:4.5px;background:#EE8740"></div><div style="position:absolute;left:5.5px;top:9.5px;width:6px;height:5px;background:#9a9090;border-radius:3px 3px 0 0"></div></div>
<svg class="abs" style="left:77.5px;top:195.0px;filter:blur(0.7px)" width="75.6" height="16.8" viewBox="0 0 75.6 16.8"><rect x="0.0" y="0.0" width="4.5" height="4.5" fill="rgb(234,234,234)"/><rect x="4.2" y="0.0" width="4.5" height="4.5" fill="rgb(226,226,226)"/><rect x="8.4" y="0.0" width="4.5" height="4.5" fill="rgb(245,245,245)"/><rect x="12.6" y="0.0" width="4.5" height="4.5" fill="rgb(235,235,235)"/><rect x="16.8" y="0.0" width="4.5" height="4.5" fill="rgb(215,215,215)"/><rect x="21.0" y="0.0" width="4.5" height="4.5" fill="rgb(239,239,239)"/><rect x="25.2" y="0.0" width="4.5" height="4.5" fill="rgb(250,250,250)"/><rect x="29.4" y="0.0" width="4.5" height="4.5" fill="rgb(250,250,250)"/><rect x="33.6" y="0.0" width="4.5" height="4.5" fill="rgb(230,230,230)"/><rect x="37.8" y="0.0" width="4.5" height="4.5" fill="rgb(227,227,227)"/><rect x="42.0" y="0.0" width="4.5" height="4.5" fill="rgb(233,233,233)"/><rect x="46.2" y="0.0" width="4.5" height="4.5" fill="rgb(238,238,238)"/><rect x="50.4" y="0.0" width="4.5" height="4.5" fill="rgb(223,223,223)"/><rect x="54.6" y="0.0" width="4.5" height="4.5" fill="rgb(242,242,242)"/><rect x="58.8" y="0.0" width="4.5" height="4.5" fill="rgb(220,220,220)"/><rect x="63.0" y="0.0" width="4.5" height="4.5" fill="rgb(217,217,217)"/><rect x="67.2" y="0.0" width="4.5" height="4.5" fill="rgb(234,234,234)"/><rect x="71.4" y="0.0" width="4.5" height="4.5" fill="rgb(250,250,250)"/><rect x="0.0" y="4.2" width="4.5" height="4.5" fill="rgb(178,178,178)"/><rect x="4.2" y="4.2" width="4.5" height="4.5" fill="rgb(191,191,191)"/><rect x="8.4" y="4.2" width="4.5" height="4.5" fill="rgb(188,188,188)"/><rect x="12.6" y="4.2" width="4.5" height="4.5" fill="rgb(196,196,196)"/><rect x="16.8" y="4.2" width="4.5" height="4.5" fill="rgb(190,190,190)"/><rect x="21.0" y="4.2" width="4.5" height="4.5" fill="rgb(221,221,221)"/><rect x="25.2" y="4.2" width="4.5" height="4.5" fill="rgb(189,189,189)"/><rect x="29.4" y="4.2" width="4.5" height="4.5" fill="rgb(222,222,222)"/><rect x="33.6" y="4.2" width="4.5" height="4.5" fill="rgb(202,202,202)"/><rect x="37.8" y="4.2" width="4.5" height="4.5" fill="rgb(201,201,201)"/><rect x="42.0" y="4.2" width="4.5" height="4.5" fill="rgb(187,187,187)"/><rect x="46.2" y="4.2" width="4.5" height="4.5" fill="rgb(199,199,199)"/><rect x="50.4" y="4.2" width="4.5" height="4.5" fill="rgb(216,216,216)"/><rect x="54.6" y="4.2" width="4.5" height="4.5" fill="rgb(216,216,216)"/><rect x="58.8" y="4.2" width="4.5" height="4.5" fill="rgb(239,239,239)"/><rect x="63.0" y="4.2" width="4.5" height="4.5" fill="rgb(200,200,200)"/><rect x="67.2" y="4.2" width="4.5" height="4.5" fill="rgb(208,208,208)"/><rect x="71.4" y="4.2" width="4.5" height="4.5" fill="rgb(189,189,189)"/><rect x="0.0" y="8.4" width="4.5" height="4.5" fill="rgb(223,223,223)"/><rect x="4.2" y="8.4" width="4.5" height="4.5" fill="rgb(194,194,194)"/><rect x="8.4" y="8.4" width="4.5" height="4.5" fill="rgb(179,179,179)"/><rect x="12.6" y="8.4" width="4.5" height="4.5" fill="rgb(200,200,200)"/><rect x="16.8" y="8.4" width="4.5" height="4.5" fill="rgb(179,179,179)"/><rect x="21.0" y="8.4" width="4.5" height="4.5" fill="rgb(204,204,204)"/><rect x="25.2" y="8.4" width="4.5" height="4.5" fill="rgb(215,215,215)"/><rect x="29.4" y="8.4" width="4.5" height="4.5" fill="rgb(246,246,246)"/><rect x="33.6" y="8.4" width="4.5" height="4.5" fill="rgb(189,189,189)"/><rect x="37.8" y="8.4" width="4.5" height="4.5" fill="rgb(230,230,230)"/><rect x="42.0" y="8.4" width="4.5" height="4.5" fill="rgb(193,193,193)"/><rect x="46.2" y="8.4" width="4.5" height="4.5" fill="rgb(207,207,207)"/><rect x="50.4" y="8.4" width="4.5" height="4.5" fill="rgb(200,200,200)"/><rect x="54.6" y="8.4" width="4.5" height="4.5" fill="rgb(194,194,194)"/><rect x="58.8" y="8.4" width="4.5" height="4.5" fill="rgb(184,184,184)"/><rect x="63.0" y="8.4" width="4.5" height="4.5" fill="rgb(201,201,201)"/><rect x="67.2" y="8.4" width="4.5" height="4.5" fill="rgb(180,180,180)"/><rect x="71.4" y="8.4" width="4.5" height="4.5" fill="rgb(183,183,183)"/><rect x="0.0" y="12.6" width="4.5" height="4.5" fill="rgb(231,231,231)"/><rect x="4.2" y="12.6" width="4.5" height="4.5" fill="rgb(244,244,244)"/><rect x="8.4" y="12.6" width="4.5" height="4.5" fill="rgb(223,223,223)"/><rect x="12.6" y="12.6" width="4.5" height="4.5" fill="rgb(250,250,250)"/><rect x="16.8" y="12.6" width="4.5" height="4.5" fill="rgb(236,236,236)"/><rect x="21.0" y="12.6" width="4.5" height="4.5" fill="rgb(220,220,220)"/><rect x="25.2" y="12.6" width="4.5" height="4.5" fill="rgb(235,235,235)"/><rect x="29.4" y="12.6" width="4.5" height="4.5" fill="rgb(237,237,237)"/><rect x="33.6" y="12.6" width="4.5" height="4.5" fill="rgb(230,230,230)"/><rect x="37.8" y="12.6" width="4.5" height="4.5" fill="rgb(250,250,250)"/><rect x="42.0" y="12.6" width="4.5" height="4.5" fill="rgb(234,234,234)"/><rect x="46.2" y="12.6" width="4.5" height="4.5" fill="rgb(250,250,250)"/><rect x="50.4" y="12.6" width="4.5" height="4.5" fill="rgb(238,238,238)"/><rect x="54.6" y="12.6" width="4.5" height="4.5" fill="rgb(241,241,241)"/><rect x="58.8" y="12.6" width="4.5" height="4.5" fill="rgb(235,235,235)"/><rect x="63.0" y="12.6" width="4.5" height="4.5" fill="rgb(216,216,216)"/><rect x="67.2" y="12.6" width="4.5" height="4.5" fill="rgb(250,250,250)"/><rect x="71.4" y="12.6" width="4.5" height="4.5" fill="rgb(230,230,230)"/></svg>
<div class="td" style="left:245px;top:196.5px">￥0</div>
<div class="td" style="left:364px;top:196.5px">0</div>
<div class="td" style="left:483px;top:196.5px">0</div>
<div class="dash" style="left:601.5px;top:193.9px"></div>
<div class="sub" style="left:601.0px;top:207.9px">较上周期–</div>
<div class="dash" style="left:727.9px;top:193.9px"></div>
<div class="sub" style="left:727.4px;top:207.9px">较上周期–</div>
<div class="dash" style="left:854.9px;top:193.9px"></div>
<div class="sub" style="left:854.4px;top:207.9px">较上周期–</div>
<div class="dash" style="left:981.0px;top:193.9px"></div>
<div class="sub" style="left:980.5px;top:207.9px">较上周期–</div>
<div class="dash" style="left:1108.0px;top:193.9px"></div>
<div class="sub" style="left:1107.5px;top:207.9px">较上周期–</div>
<div class="td" style="left:8px;top:249.7px">4</div>
<div class="abs" style="left:47.5px;top:244.2px;width:24px;height:24px;overflow:hidden"><div style="position:absolute;inset:0;background:#F3C5D3"></div><div style="position:absolute;left:6px;top:5.5px;width:12px;height:11px;border:1.4px solid #fff;border-radius:2px 2px 50% 50%"></div><div style="position:absolute;left:8.5px;top:10px;width:7px;height:2px;background:#fff"></div></div>
<svg class="abs" style="left:77.5px;top:248.2px;filter:blur(0.7px)" width="75.6" height="16.8" viewBox="0 0 75.6 16.8"><rect x="0.0" y="0.0" width="4.5" height="4.5" fill="rgb(240,240,240)"/><rect x="4.2" y="0.0" width="4.5" height="4.5" fill="rgb(217,217,217)"/><rect x="8.4" y="0.0" width="4.5" height="4.5" fill="rgb(250,250,250)"/><rect x="12.6" y="0.0" width="4.5" height="4.5" fill="rgb(219,219,219)"/><rect x="16.8" y="0.0" width="4.5" height="4.5" fill="rgb(230,230,230)"/><rect x="21.0" y="0.0" width="4.5" height="4.5" fill="rgb(238,238,238)"/><rect x="25.2" y="0.0" width="4.5" height="4.5" fill="rgb(250,250,250)"/><rect x="29.4" y="0.0" width="4.5" height="4.5" fill="rgb(230,230,230)"/><rect x="33.6" y="0.0" width="4.5" height="4.5" fill="rgb(238,238,238)"/><rect x="37.8" y="0.0" width="4.5" height="4.5" fill="rgb(244,244,244)"/><rect x="42.0" y="0.0" width="4.5" height="4.5" fill="rgb(250,250,250)"/><rect x="46.2" y="0.0" width="4.5" height="4.5" fill="rgb(233,233,233)"/><rect x="50.4" y="0.0" width="4.5" height="4.5" fill="rgb(240,240,240)"/><rect x="54.6" y="0.0" width="4.5" height="4.5" fill="rgb(236,236,236)"/><rect x="58.8" y="0.0" width="4.5" height="4.5" fill="rgb(250,250,250)"/><rect x="63.0" y="0.0" width="4.5" height="4.5" fill="rgb(228,228,228)"/><rect x="67.2" y="0.0" width="4.5" height="4.5" fill="rgb(217,217,217)"/><rect x="71.4" y="0.0" width="4.5" height="4.5" fill="rgb(228,228,228)"/><rect x="0.0" y="4.2" width="4.5" height="4.5" fill="rgb(206,206,206)"/><rect x="4.2" y="4.2" width="4.5" height="4.5" fill="rgb(190,190,190)"/><rect x="8.4" y="4.2" width="4.5" height="4.5" fill="rgb(236,236,236)"/><rect x="12.6" y="4.2" width="4.5" height="4.5" fill="rgb(180,180,180)"/><rect x="16.8" y="4.2" width="4.5" height="4.5" fill="rgb(190,190,190)"/><rect x="21.0" y="4.2" width="4.5" height="4.5" fill="rgb(201,201,201)"/><rect x="25.2" y="4.2" width="4.5" height="4.5" fill="rgb(190,190,190)"/><rect x="29.4" y="4.2" width="4.5" height="4.5" fill="rgb(219,219,219)"/><rect x="33.6" y="4.2" width="4.5" height="4.5" fill="rgb(210,210,210)"/><rect x="37.8" y="4.2" width="4.5" height="4.5" fill="rgb(179,179,179)"/><rect x="42.0" y="4.2" width="4.5" height="4.5" fill="rgb(193,193,193)"/><rect x="46.2" y="4.2" width="4.5" height="4.5" fill="rgb(197,197,197)"/><rect x="50.4" y="4.2" width="4.5" height="4.5" fill="rgb(225,225,225)"/><rect x="54.6" y="4.2" width="4.5" height="4.5" fill="rgb(221,221,221)"/><rect x="58.8" y="4.2" width="4.5" height="4.5" fill="rgb(185,185,185)"/><rect x="63.0" y="4.2" width="4.5" height="4.5" fill="rgb(195,195,195)"/><rect x="67.2" y="4.2" width="4.5" height="4.5" fill="rgb(190,190,190)"/><rect x="71.4" y="4.2" width="4.5" height="4.5" fill="rgb(192,192,192)"/><rect x="0.0" y="8.4" width="4.5" height="4.5" fill="rgb(191,191,191)"/><rect x="4.2" y="8.4" width="4.5" height="4.5" fill="rgb(222,222,222)"/><rect x="8.4" y="8.4" width="4.5" height="4.5" fill="rgb(190,190,190)"/><rect x="12.6" y="8.4" width="4.5" height="4.5" fill="rgb(179,179,179)"/><rect x="16.8" y="8.4" width="4.5" height="4.5" fill="rgb(213,213,213)"/><rect x="21.0" y="8.4" width="4.5" height="4.5" fill="rgb(217,217,217)"/><rect x="25.2" y="8.4" width="4.5" height="4.5" fill="rgb(201,201,201)"/><rect x="29.4" y="8.4" width="4.5" height="4.5" fill="rgb(202,202,202)"/><rect x="33.6" y="8.4" width="4.5" height="4.5" fill="rgb(221,221,221)"/><rect x="37.8" y="8.4" width="4.5" height="4.5" fill="rgb(181,181,181)"/><rect x="42.0" y="8.4" width="4.5" height="4.5" fill="rgb(216,216,216)"/><rect x="46.2" y="8.4" width="4.5" height="4.5" fill="rgb(243,243,243)"/><rect x="50.4" y="8.4" width="4.5" height="4.5" fill="rgb(206,206,206)"/><rect x="54.6" y="8.4" width="4.5" height="4.5" fill="rgb(183,183,183)"/><rect x="58.8" y="8.4" width="4.5" height="4.5" fill="rgb(220,220,220)"/><rect x="63.0" y="8.4" width="4.5" height="4.5" fill="rgb(206,206,206)"/><rect x="67.2" y="8.4" width="4.5" height="4.5" fill="rgb(202,202,202)"/><rect x="71.4" y="8.4" width="4.5" height="4.5" fill="rgb(211,211,211)"/><rect x="0.0" y="12.6" width="4.5" height="4.5" fill="rgb(224,224,224)"/><rect x="4.2" y="12.6" width="4.5" height="4.5" fill="rgb(228,228,228)"/><rect x="8.4" y="12.6" width="4.5" height="4.5" fill="rgb(221,221,221)"/><rect x="12.6" y="12.6" width="4.5" height="4.5" fill="rgb(223,223,223)"/><rect x="16.8" y="12.6" width="4.5" height="4.5" fill="rgb(238,238,238)"/><rect x="21.0" y="12.6" width="4.5" height="4.5" fill="rgb(250,250,250)"/><rect x="25.2" y="12.6" width="4.5" height="4.5" fill="rgb(232,232,232)"/><rect x="29.4" y="12.6" width="4.5" height="4.5" fill="rgb(233,233,233)"/><rect x="33.6" y="12.6" width="4.5" height="4.5" fill="rgb(221,221,221)"/><rect x="37.8" y="12.6" width="4.5" height="4.5" fill="rgb(229,229,229)"/><rect x="42.0" y="12.6" width="4.5" height="4.5" fill="rgb(231,231,231)"/><rect x="46.2" y="12.6" width="4.5" height="4.5" fill="rgb(228,228,228)"/><rect x="50.4" y="12.6" width="4.5" height="4.5" fill="rgb(228,228,228)"/><rect x="54.6" y="12.6" width="4.5" height="4.5" fill="rgb(223,223,223)"/><rect x="58.8" y="12.6" width="4.5" height="4.5" fill="rgb(236,236,236)"/><rect x="63.0" y="12.6" width="4.5" height="4.5" fill="rgb(219,219,219)"/><rect x="67.2" y="12.6" width="4.5" height="4.5" fill="rgb(230,230,230)"/><rect x="71.4" y="12.6" width="4.5" height="4.5" fill="rgb(240,240,240)"/></svg>
<div class="td" style="left:245px;top:249.7px">￥0</div>
<div class="td" style="left:364px;top:249.7px">0</div>
<div class="td" style="left:483px;top:249.7px">0</div>
<div class="dash" style="left:601.5px;top:247.1px"></div>
<div class="sub" style="left:601.0px;top:261.1px">较上周期–</div>
<div class="dash" style="left:727.9px;top:247.1px"></div>
<div class="sub" style="left:727.4px;top:261.1px">较上周期–</div>
<div class="dash" style="left:854.9px;top:247.1px"></div>
<div class="sub" style="left:854.4px;top:261.1px">较上周期–</div>
<div class="dash" style="left:981.0px;top:247.1px"></div>
<div class="sub" style="left:980.5px;top:261.1px">较上周期–</div>
<div class="dash" style="left:1108.0px;top:247.1px"></div>
<div class="sub" style="left:1107.5px;top:261.1px">较上周期–</div>
<div class="td" style="left:8px;top:302.9px">5</div>
<div class="abs" style="left:47.5px;top:297.4px;width:24px;height:24px;overflow:hidden"><div style="position:absolute;inset:0;background:#050505"></div><div style="position:absolute;left:4px;top:11px;width:15px;height:3.5px;background:#eee;border-radius:40% 60% 10% 10%"></div><div style="position:absolute;left:10px;top:7px;width:7px;height:5px;background:#bbb;transform:skewX(-30deg)"></div><div style="position:absolute;left:4.5px;top:16px;width:15px;height:2.5px;background:#bdbdbd"></div></div>
<svg class="abs" style="left:77.5px;top:301.4px;filter:blur(0.7px)" width="54.6" height="16.8" viewBox="0 0 54.6 16.8"><rect x="0.0" y="0.0" width="4.5" height="4.5" fill="rgb(225,225,225)"/><rect x="4.2" y="0.0" width="4.5" height="4.5" fill="rgb(227,227,227)"/><rect x="8.4" y="0.0" width="4.5" height="4.5" fill="rgb(217,217,217)"/><rect x="12.6" y="0.0" width="4.5" height="4.5" fill="rgb(218,218,218)"/><rect x="16.8" y="0.0" width="4.5" height="4.5" fill="rgb(216,216,216)"/><rect x="21.0" y="0.0" width="4.5" height="4.5" fill="rgb(250,250,250)"/><rect x="25.2" y="0.0" width="4.5" height="4.5" fill="rgb(228,228,228)"/><rect x="29.4" y="0.0" width="4.5" height="4.5" fill="rgb(250,250,250)"/><rect x="33.6" y="0.0" width="4.5" height="4.5" fill="rgb(250,250,250)"/><rect x="37.8" y="0.0" width="4.5" height="4.5" fill="rgb(233,233,233)"/><rect x="42.0" y="0.0" width="4.5" height="4.5" fill="rgb(222,222,222)"/><rect x="46.2" y="0.0" width="4.5" height="4.5" fill="rgb(233,233,233)"/><rect x="50.4" y="0.0" width="4.5" height="4.5" fill="rgb(233,233,233)"/><rect x="0.0" y="4.2" width="4.5" height="4.5" fill="rgb(181,181,181)"/><rect x="4.2" y="4.2" width="4.5" height="4.5" fill="rgb(180,180,180)"/><rect x="8.4" y="4.2" width="4.5" height="4.5" fill="rgb(186,186,186)"/><rect x="12.6" y="4.2" width="4.5" height="4.5" fill="rgb(187,187,187)"/><rect x="16.8" y="4.2" width="4.5" height="4.5" fill="rgb(214,214,214)"/><rect x="21.0" y="4.2" width="4.5" height="4.5" fill="rgb(221,221,221)"/><rect x="25.2" y="4.2" width="4.5" height="4.5" fill="rgb(215,215,215)"/><rect x="29.4" y="4.2" width="4.5" height="4.5" fill="rgb(190,190,190)"/><rect x="33.6" y="4.2" width="4.5" height="4.5" fill="rgb(213,213,213)"/><rect x="37.8" y="4.2" width="4.5" height="4.5" fill="rgb(250,250,250)"/><rect x="42.0" y="4.2" width="4.5" height="4.5" fill="rgb(191,191,191)"/><rect x="46.2" y="4.2" width="4.5" height="4.5" fill="rgb(212,212,212)"/><rect x="50.4" y="4.2" width="4.5" height="4.5" fill="rgb(198,198,198)"/><rect x="0.0" y="8.4" width="4.5" height="4.5" fill="rgb(207,207,207)"/><rect x="4.2" y="8.4" width="4.5" height="4.5" fill="rgb(193,193,193)"/><rect x="8.4" y="8.4" width="4.5" height="4.5" fill="rgb(222,222,222)"/><rect x="12.6" y="8.4" width="4.5" height="4.5" fill="rgb(183,183,183)"/><rect x="16.8" y="8.4" width="4.5" height="4.5" fill="rgb(211,211,211)"/><rect x="21.0" y="8.4" width="4.5" height="4.5" fill="rgb(199,199,199)"/><rect x="25.2" y="8.4" width="4.5" height="4.5" fill="rgb(196,196,196)"/><rect x="29.4" y="8.4" width="4.5" height="4.5" fill="rgb(222,222,222)"/><rect x="33.6" y="8.4" width="4.5" height="4.5" fill="rgb(204,204,204)"/><rect x="37.8" y="8.4" width="4.5" height="4.5" fill="rgb(199,199,199)"/><rect x="42.0" y="8.4" width="4.5" height="4.5" fill="rgb(209,209,209)"/><rect x="46.2" y="8.4" width="4.5" height="4.5" fill="rgb(250,250,250)"/><rect x="50.4" y="8.4" width="4.5" height="4.5" fill="rgb(213,213,213)"/><rect x="0.0" y="12.6" width="4.5" height="4.5" fill="rgb(243,243,243)"/><rect x="4.2" y="12.6" width="4.5" height="4.5" fill="rgb(225,225,225)"/><rect x="8.4" y="12.6" width="4.5" height="4.5" fill="rgb(234,234,234)"/><rect x="12.6" y="12.6" width="4.5" height="4.5" fill="rgb(240,240,240)"/><rect x="16.8" y="12.6" width="4.5" height="4.5" fill="rgb(250,250,250)"/><rect x="21.0" y="12.6" width="4.5" height="4.5" fill="rgb(223,223,223)"/><rect x="25.2" y="12.6" width="4.5" height="4.5" fill="rgb(250,250,250)"/><rect x="29.4" y="12.6" width="4.5" height="4.5" fill="rgb(238,238,238)"/><rect x="33.6" y="12.6" width="4.5" height="4.5" fill="rgb(235,235,235)"/><rect x="37.8" y="12.6" width="4.5" height="4.5" fill="rgb(236,236,236)"/><rect x="42.0" y="12.6" width="4.5" height="4.5" fill="rgb(224,224,224)"/><rect x="46.2" y="12.6" width="4.5" height="4.5" fill="rgb(243,243,243)"/><rect x="50.4" y="12.6" width="4.5" height="4.5" fill="rgb(215,215,215)"/></svg>
<div class="td" style="left:245px;top:302.9px">￥0</div>
<div class="td" style="left:364px;top:302.9px">1</div>
<div class="td" style="left:483px;top:302.9px">0</div>
<div class="dash" style="left:601.5px;top:300.3px"></div>
<div class="sub" style="left:601.0px;top:314.3px">较上周期–</div>
<div class="dash" style="left:727.9px;top:300.3px"></div>
<div class="sub" style="left:727.4px;top:314.3px">较上周期–</div>
<div class="dash" style="left:854.9px;top:300.3px"></div>
<div class="sub" style="left:854.4px;top:314.3px">较上周期–</div>
<div class="dash" style="left:981.0px;top:300.3px"></div>
<div class="sub" style="left:980.5px;top:314.3px">较上周期–</div>
<div class="dash" style="left:1108.0px;top:300.3px"></div>
<div class="sub" style="left:1107.5px;top:314.3px">较上周期–</div>
<div class="td" style="left:8px;top:356.1px">6</div>
<div class="abs" style="left:47.5px;top:350.6px;width:24px;height:24px;overflow:hidden"><div style="position:absolute;inset:0;background:#A6956B"></div><div style="position:absolute;left:8px;top:4.5px;font-size:11px;line-height:11px;color:#fff">Y</div><div style="position:absolute;left:5.5px;top:17px;width:13px;height:1.2px;background:#e8e0cc"></div></div>
<svg class="abs" style="left:77.5px;top:354.6px;filter:blur(0.7px)" width="67.2" height="16.8" viewBox="0 0 67.2 16.8"><rect x="0.0" y="0.0" width="4.5" height="4.5" fill="rgb(222,222,222)"/><rect x="4.2" y="0.0" width="4.5" height="4.5" fill="rgb(227,227,227)"/><rect x="8.4" y="0.0" width="4.5" height="4.5" fill="rgb(250,250,250)"/><rect x="12.6" y="0.0" width="4.5" height="4.5" fill="rgb(219,219,219)"/><rect x="16.8" y="0.0" width="4.5" height="4.5" fill="rgb(231,231,231)"/><rect x="21.0" y="0.0" width="4.5" height="4.5" fill="rgb(250,250,250)"/><rect x="25.2" y="0.0" width="4.5" height="4.5" fill="rgb(230,230,230)"/><rect x="29.4" y="0.0" width="4.5" height="4.5" fill="rgb(230,230,230)"/><rect x="33.6" y="0.0" width="4.5" height="4.5" fill="rgb(243,243,243)"/><rect x="37.8" y="0.0" width="4.5" height="4.5" fill="rgb(217,217,217)"/><rect x="42.0" y="0.0" width="4.5" height="4.5" fill="rgb(250,250,250)"/><rect x="46.2" y="0.0" width="4.5" height="4.5" fill="rgb(223,223,223)"/><rect x="50.4" y="0.0" width="4.5" height="4.5" fill="rgb(230,230,230)"/><rect x="54.6" y="0.0" width="4.5" height="4.5" fill="rgb(227,227,227)"/><rect x="58.8" y="0.0" width="4.5" height="4.5" fill="rgb(236,236,236)"/><rect x="63.0" y="0.0" width="4.5" height="4.5" fill="rgb(250,250,250)"/><rect x="0.0" y="4.2" width="4.5" height="4.5" fill="rgb(217,217,217)"/><rect x="4.2" y="4.2" width="4.5" height="4.5" fill="rgb(184,184,184)"/><rect x="8.4" y="4.2" width="4.5" height="4.5" fill="rgb(199,199,199)"/><rect x="12.6" y="4.2" width="4.5" height="4.5" fill="rgb(183,183,183)"/><rect x="16.8" y="4.2" width="4.5" height="4.5" fill="rgb(219,219,219)"/><rect x="21.0" y="4.2" width="4.5" height="4.5" fill="rgb(191,191,191)"/><rect x="25.2" y="4.2" width="4.5" height="4.5" fill="rgb(187,187,187)"/><rect x="29.4" y="4.2" width="4.5" height="4.5" fill="rgb(212,212,212)"/><rect x="33.6" y="4.2" width="4.5" height="4.5" fill="rgb(209,209,209)"/><rect x="37.8" y="4.2" width="4.5" height="4.5" fill="rgb(187,187,187)"/><rect x="42.0" y="4.2" width="4.5" height="4.5" fill="rgb(215,215,215)"/><rect x="46.2" y="4.2" width="4.5" height="4.5" fill="rgb(215,215,215)"/><rect x="50.4" y="4.2" width="4.5" height="4.5" fill="rgb(196,196,196)"/><rect x="54.6" y="4.2" width="4.5" height="4.5" fill="rgb(205,205,205)"/><rect x="58.8" y="4.2" width="4.5" height="4.5" fill="rgb(250,250,250)"/><rect x="63.0" y="4.2" width="4.5" height="4.5" fill="rgb(222,222,222)"/><rect x="0.0" y="8.4" width="4.5" height="4.5" fill="rgb(200,200,200)"/><rect x="4.2" y="8.4" width="4.5" height="4.5" fill="rgb(209,209,209)"/><rect x="8.4" y="8.4" width="4.5" height="4.5" fill="rgb(190,190,190)"/><rect x="12.6" y="8.4" width="4.5" height="4.5" fill="rgb(200,200,200)"/><rect x="16.8" y="8.4" width="4.5" height="4.5" fill="rgb(210,210,210)"/><rect x="21.0" y="8.4" width="4.5" height="4.5" fill="rgb(210,210,210)"/><rect x="25.2" y="8.4" width="4.5" height="4.5" fill="rgb(212,212,212)"/><rect x="29.4" y="8.4" width="4.5" height="4.5" fill="rgb(193,193,193)"/><rect x="33.6" y="8.4" width="4.5" height="4.5" fill="rgb(196,196,196)"/><rect x="37.8" y="8.4" width="4.5" height="4.5" fill="rgb(235,235,235)"/><rect x="42.0" y="8.4" width="4.5" height="4.5" fill="rgb(194,194,194)"/><rect x="46.2" y="8.4" width="4.5" height="4.5" fill="rgb(223,223,223)"/><rect x="50.4" y="8.4" width="4.5" height="4.5" fill="rgb(189,189,189)"/><rect x="54.6" y="8.4" width="4.5" height="4.5" fill="rgb(185,185,185)"/><rect x="58.8" y="8.4" width="4.5" height="4.5" fill="rgb(220,220,220)"/><rect x="63.0" y="8.4" width="4.5" height="4.5" fill="rgb(179,179,179)"/><rect x="0.0" y="12.6" width="4.5" height="4.5" fill="rgb(239,239,239)"/><rect x="4.2" y="12.6" width="4.5" height="4.5" fill="rgb(250,250,250)"/><rect x="8.4" y="12.6" width="4.5" height="4.5" fill="rgb(239,239,239)"/><rect x="12.6" y="12.6" width="4.5" height="4.5" fill="rgb(241,241,241)"/><rect x="16.8" y="12.6" width="4.5" height="4.5" fill="rgb(228,228,228)"/><rect x="21.0" y="12.6" width="4.5" height="4.5" fill="rgb(219,219,219)"/><rect x="25.2" y="12.6" width="4.5" height="4.5" fill="rgb(229,229,229)"/><rect x="29.4" y="12.6" width="4.5" height="4.5" fill="rgb(217,217,217)"/><rect x="33.6" y="12.6" width="4.5" height="4.5" fill="rgb(224,224,224)"/><rect x="37.8" y="12.6" width="4.5" height="4.5" fill="rgb(250,250,250)"/><rect x="42.0" y="12.6" width="4.5" height="4.5" fill="rgb(218,218,218)"/><rect x="46.2" y="12.6" width="4.5" height="4.5" fill="rgb(231,231,231)"/><rect x="50.4" y="12.6" width="4.5" height="4.5" fill="rgb(240,240,240)"/><rect x="54.6" y="12.6" width="4.5" height="4.5" fill="rgb(230,230,230)"/><rect x="58.8" y="12.6" width="4.5" height="4.5" fill="rgb(250,250,250)"/><rect x="63.0" y="12.6" width="4.5" height="4.5" fill="rgb(215,215,215)"/></svg>
<div class="td" style="left:245px;top:356.1px">￥0</div>
<div class="td" style="left:364px;top:356.1px">0</div>
<div class="td" style="left:483px;top:356.1px">0</div>
<div class="dash" style="left:601.5px;top:353.5px"></div>
<div class="sub" style="left:601.0px;top:367.5px">较上周期–</div>
<div class="dash" style="left:727.9px;top:353.5px"></div>
<div class="sub" style="left:727.4px;top:367.5px">较上周期–</div>
<div class="dash" style="left:854.9px;top:353.5px"></div>
<div class="sub" style="left:854.4px;top:367.5px">较上周期–</div>
<div class="dash" style="left:981.0px;top:353.5px"></div>
<div class="sub" style="left:980.5px;top:367.5px">较上周期–</div>
<div class="dash" style="left:1108.0px;top:353.5px"></div>
<div class="sub" style="left:1107.5px;top:367.5px">较上周期–</div>
<div class="td" style="left:8px;top:409.3px">7</div>
<div class="abs" style="left:47.5px;top:403.8px;width:24px;height:24px;overflow:hidden"><div style="position:absolute;inset:0;background:#F6EBDD;border:2.2px solid #7D5530"></div><div style="position:absolute;left:8px;top:6px;width:8px;height:4px;background:#9c7450"></div></div>
<svg class="abs" style="left:77.5px;top:407.8px;filter:blur(0.7px)" width="88.2" height="16.8" viewBox="0 0 88.2 16.8"><rect x="0.0" y="0.0" width="4.5" height="4.5" fill="rgb(229,229,229)"/><rect x="4.2" y="0.0" width="4.5" height="4.5" fill="rgb(223,223,223)"/><rect x="8.4" y="0.0" width="4.5" height="4.5" fill="rgb(242,242,242)"/><rect x="12.6" y="0.0" width="4.5" height="4.5" fill="rgb(225,225,225)"/><rect x="16.8" y="0.0" width="4.5" height="4.5" fill="rgb(243,243,243)"/><rect x="21.0" y="0.0" width="4.5" height="4.5" fill="rgb(225,225,225)"/><rect x="25.2" y="0.0" width="4.5" height="4.5" fill="rgb(234,234,234)"/><rect x="29.4" y="0.0" width="4.5" height="4.5" fill="rgb(238,238,238)"/><rect x="33.6" y="0.0" width="4.5" height="4.5" fill="rgb(237,237,237)"/><rect x="37.8" y="0.0" width="4.5" height="4.5" fill="rgb(245,245,245)"/><rect x="42.0" y="0.0" width="4.5" height="4.5" fill="rgb(220,220,220)"/><rect x="46.2" y="0.0" width="4.5" height="4.5" fill="rgb(250,250,250)"/><rect x="50.4" y="0.0" width="4.5" height="4.5" fill="rgb(231,231,231)"/><rect x="54.6" y="0.0" width="4.5" height="4.5" fill="rgb(250,250,250)"/><rect x="58.8" y="0.0" width="4.5" height="4.5" fill="rgb(237,237,237)"/><rect x="63.0" y="0.0" width="4.5" height="4.5" fill="rgb(238,238,238)"/><rect x="67.2" y="0.0" width="4.5" height="4.5" fill="rgb(244,244,244)"/><rect x="71.4" y="0.0" width="4.5" height="4.5" fill="rgb(236,236,236)"/><rect x="75.6" y="0.0" width="4.5" height="4.5" fill="rgb(240,240,240)"/><rect x="79.8" y="0.0" width="4.5" height="4.5" fill="rgb(217,217,217)"/><rect x="84.0" y="0.0" width="4.5" height="4.5" fill="rgb(244,244,244)"/><rect x="0.0" y="4.2" width="4.5" height="4.5" fill="rgb(195,195,195)"/><rect x="4.2" y="4.2" width="4.5" height="4.5" fill="rgb(180,180,180)"/><rect x="8.4" y="4.2" width="4.5" height="4.5" fill="rgb(178,178,178)"/><rect x="12.6" y="4.2" width="4.5" height="4.5" fill="rgb(181,181,181)"/><rect x="16.8" y="4.2" width="4.5" height="4.5" fill="rgb(209,209,209)"/><rect x="21.0" y="4.2" width="4.5" height="4.5" fill="rgb(193,193,193)"/><rect x="25.2" y="4.2" width="4.5" height="4.5" fill="rgb(185,185,185)"/><rect x="29.4" y="4.2" width="4.5" height="4.5" fill="rgb(178,178,178)"/><rect x="33.6" y="4.2" width="4.5" height="4.5" fill="rgb(215,215,215)"/><rect x="37.8" y="4.2" width="4.5" height="4.5" fill="rgb(190,190,190)"/><rect x="42.0" y="4.2" width="4.5" height="4.5" fill="rgb(183,183,183)"/><rect x="46.2" y="4.2" width="4.5" height="4.5" fill="rgb(179,179,179)"/><rect x="50.4" y="4.2" width="4.5" height="4.5" fill="rgb(214,214,214)"/><rect x="54.6" y="4.2" width="4.5" height="4.5" fill="rgb(190,190,190)"/><rect x="58.8" y="4.2" width="4.5" height="4.5" fill="rgb(203,203,203)"/><rect x="63.0" y="4.2" width="4.5" height="4.5" fill="rgb(183,183,183)"/><rect x="67.2" y="4.2" width="4.5" height="4.5" fill="rgb(187,187,187)"/><rect x="71.4" y="4.2" width="4.5" height="4.5" fill="rgb(216,216,216)"/><rect x="75.6" y="4.2" width="4.5" height="4.5" fill="rgb(220,220,220)"/><rect x="79.8" y="4.2" width="4.5" height="4.5" fill="rgb(213,213,213)"/><rect x="84.0" y="4.2" width="4.5" height="4.5" fill="rgb(187,187,187)"/><rect x="0.0" y="8.4" width="4.5" height="4.5" fill="rgb(225,225,225)"/><rect x="4.2" y="8.4" width="4.5" height="4.5" fill="rgb(180,180,180)"/><rect x="8.4" y="8.4" width="4.5" height="4.5" fill="rgb(223,223,223)"/><rect x="12.6" y="8.4" width="4.5" height="4.5" fill="rgb(193,193,193)"/><rect x="16.8" y="8.4" width="4.5" height="4.5" fill="rgb(250,250,250)"/><rect x="21.0" y="8.4" width="4.5" height="4.5" fill="rgb(201,201,201)"/><rect x="25.2" y="8.4" width="4.5" height="4.5" fill="rgb(211,211,211)"/><rect x="29.4" y="8.4" width="4.5" height="4.5" fill="rgb(250,250,250)"/><rect x="33.6" y="8.4" width="4.5" height="4.5" fill="rgb(240,240,240)"/><rect x="37.8" y="8.4" width="4.5" height="4.5" fill="rgb(215,215,215)"/><rect x="42.0" y="8.4" width="4.5" height="4.5" fill="rgb(191,191,191)"/><rect x="46.2" y="8.4" width="4.5" height="4.5" fill="rgb(214,214,214)"/><rect x="50.4" y="8.4" width="4.5" height="4.5" fill="rgb(202,202,202)"/><rect x="54.6" y="8.4" width="4.5" height="4.5" fill="rgb(239,239,239)"/><rect x="58.8" y="8.4" width="4.5" height="4.5" fill="rgb(185,185,185)"/><rect x="63.0" y="8.4" width="4.5" height="4.5" fill="rgb(206,206,206)"/><rect x="67.2" y="8.4" width="4.5" height="4.5" fill="rgb(183,183,183)"/><rect x="71.4" y="8.4" width="4.5" height="4.5" fill="rgb(236,236,236)"/><rect x="75.6" y="8.4" width="4.5" height="4.5" fill="rgb(221,221,221)"/><rect x="79.8" y="8.4" width="4.5" height="4.5" fill="rgb(213,213,213)"/><rect x="84.0" y="8.4" width="4.5" height="4.5" fill="rgb(209,209,209)"/><rect x="0.0" y="12.6" width="4.5" height="4.5" fill="rgb(239,239,239)"/><rect x="4.2" y="12.6" width="4.5" height="4.5" fill="rgb(250,250,250)"/><rect x="8.4" y="12.6" width="4.5" height="4.5" fill="rgb(235,235,235)"/><rect x="12.6" y="12.6" width="4.5" height="4.5" fill="rgb(245,245,245)"/><rect x="16.8" y="12.6" width="4.5" height="4.5" fill="rgb(231,231,231)"/><rect x="21.0" y="12.6" width="4.5" height="4.5" fill="rgb(242,242,242)"/><rect x="25.2" y="12.6" width="4.5" height="4.5" fill="rgb(219,219,219)"/><rect x="29.4" y="12.6" width="4.5" height="4.5" fill="rgb(220,220,220)"/><rect x="33.6" y="12.6" width="4.5" height="4.5" fill="rgb(243,243,243)"/><rect x="37.8" y="12.6" width="4.5" height="4.5" fill="rgb(216,216,216)"/><rect x="42.0" y="12.6" width="4.5" height="4.5" fill="rgb(240,240,240)"/><rect x="46.2" y="12.6" width="4.5" height="4.5" fill="rgb(245,245,245)"/><rect x="50.4" y="12.6" width="4.5" height="4.5" fill="rgb(218,218,218)"/><rect x="54.6" y="12.6" width="4.5" height="4.5" fill="rgb(250,250,250)"/><rect x="58.8" y="12.6" width="4.5" height="4.5" fill="rgb(229,229,229)"/><rect x="63.0" y="12.6" width="4.5" height="4.5" fill="rgb(227,227,227)"/><rect x="67.2" y="12.6" width="4.5" height="4.5" fill="rgb(215,215,215)"/><rect x="71.4" y="12.6" width="4.5" height="4.5" fill="rgb(226,226,226)"/><rect x="75.6" y="12.6" width="4.5" height="4.5" fill="rgb(230,230,230)"/><rect x="79.8" y="12.6" width="4.5" height="4.5" fill="rgb(219,219,219)"/><rect x="84.0" y="12.6" width="4.5" height="4.5" fill="rgb(238,238,238)"/></svg>
<div class="td" style="left:245px;top:409.3px">￥0</div>
<div class="td" style="left:364px;top:409.3px">0</div>
<div class="td" style="left:483px;top:409.3px">0</div>
<div class="dash" style="left:601.5px;top:406.7px"></div>
<div class="sub" style="left:601.0px;top:420.7px">较上周期–</div>
<div class="dash" style="left:727.9px;top:406.7px"></div>
<div class="sub" style="left:727.4px;top:420.7px">较上周期–</div>
<div class="dash" style="left:854.9px;top:406.7px"></div>
<div class="sub" style="left:854.4px;top:420.7px">较上周期–</div>
<div class="dash" style="left:981.0px;top:406.7px"></div>
<div class="sub" style="left:980.5px;top:420.7px">较上周期–</div>
<div class="dash" style="left:1108.0px;top:406.7px"></div>
<div class="sub" style="left:1107.5px;top:420.7px">较上周期–</div>
<div class="abs" style="left:1197.5px;top:0;width:78.5px;height:500px;background:#fff;box-shadow:-6px 0 8px -4px rgba(0,0,0,.10)"></div>
<div class="hd" style="left:1197.5px;top:0;width:78.5px;height:70px"></div>
<div class="hl" style="left:1197.5px;top:70.0px;width:78.5px"></div>
<div class="hl" style="left:1197.5px;top:123.2px;width:78.5px"></div>
<div class="hl" style="left:1197.5px;top:176.4px;width:78.5px"></div>
<div class="hl" style="left:1197.5px;top:229.6px;width:78.5px"></div>
<div class="hl" style="left:1197.5px;top:282.8px;width:78.5px"></div>
<div class="hl" style="left:1197.5px;top:336.0px;width:78.5px"></div>
<div class="hl" style="left:1197.5px;top:389.2px;width:78.5px"></div>
<div class="hl" style="left:1197.5px;top:442.4px;width:78.5px"></div>
<div class="vl" style="left:1197.5px;top:0;height:500px"></div>
<div class="vl" style="left:1275.0px;top:0;height:500px"></div>
<div class="th" style="left:1207.0px;top:29.0px">操作</div>
<div class="td" style="left:1207px;top:90.1px;color:#7346F6;-webkit-text-stroke:0.2px currentColor">详情</div>
<div class="td" style="left:1207px;top:143.3px;color:#7346F6;-webkit-text-stroke:0.2px currentColor">详情</div>
<div class="td" style="left:1207px;top:196.5px;color:#7346F6;-webkit-text-stroke:0.2px currentColor">详情</div>
<div class="td" style="left:1207px;top:249.7px;color:#7346F6;-webkit-text-stroke:0.2px currentColor">详情</div>
<div class="td" style="left:1207px;top:302.9px;color:#7346F6;-webkit-text-stroke:0.2px currentColor">详情</div>
<div class="td" style="left:1207px;top:356.1px;color:#7346F6;-webkit-text-stroke:0.2px currentColor">详情</div>
<div class="td" style="left:1207px;top:409.3px;color:#7346F6;-webkit-text-stroke:0.2px currentColor">详情</div></div></div><!--c3end-->
</div>
<div id="frame"></div>


<div id="dialog"><div class="abs" style="left:1172px;top:180px;width:824px;height:439px;border:12px solid rgba(123,54,250,.22);border-radius:20px"></div>
<div class="abs" style="left:1486px;top:0;width:514px;height:800px;overflow:hidden"><div class="abs" style="left:-314px;top:180px;width:824px;height:439px;border:12px solid #7B36FA;border-radius:20px;background:#7B36FA"></div></div>
<div class="abs" style="left:1472px;top:180px;width:8px;height:12px;background:#7B36FA"></div>
<div class="abs" style="left:1472px;top:607px;width:8px;height:12px;background:#7B36FA"></div>
<div class="abs" id="dlg" style="left:1184px;top:192px;width:800px;height:415px;background:#fff;border-radius:9px">
<div class="txt" style="left:10.0px;top:13.0px;font-size:15px;line-height:15px;color:#303133">选择要显示的字段</div>
<div class="abs" style="left:781.0px;top:11.0px;width:10px;height:10px"><svg width="10" height="10" viewBox="0 0 10 10" stroke="#909399" stroke-width="1"><path d="M1 1l8 8M9 1L1 9"/></svg></div>
<div class="txt" style="left:10.0px;top:53.0px;font-size:11.5px;line-height:12px;color:#606266;-webkit-text-stroke:0.2px currentColor">基础信息</div>
<div class="abs" style="left:10.0px;top:77.8px;width:11px;height:11px"><svg width="11" height="11" viewBox="0 0 11 11"><rect width="11" height="11" rx="2" fill="#7040F8"/><path d="M2.6 5.6l2 2 3.8-3.9" fill="none" stroke="#fff" stroke-width="1.1"/></svg></div>
<div class="txt" style="left:27.5px;top:77.3px;font-size:11.5px;line-height:12px;color:#7A42F5;-webkit-text-stroke:0.2px currentColor">账户余额</div>
<div class="abs" style="left:97.0px;top:77.8px;width:11px;height:11px"><svg width="11" height="11" viewBox="0 0 11 11"><rect width="11" height="11" rx="2" fill="#7040F8"/><path d="M2.6 5.6l2 2 3.8-3.9" fill="none" stroke="#fff" stroke-width="1.1"/></svg></div>
<div class="txt" style="left:114.5px;top:77.3px;font-size:11.5px;line-height:12px;color:#7A42F5;-webkit-text-stroke:0.2px currentColor">全部计划数</div>
<div class="abs" style="left:195.6px;top:77.8px;width:11px;height:11px"><svg width="11" height="11" viewBox="0 0 11 11"><rect width="11" height="11" rx="2" fill="#7040F8"/><path d="M2.6 5.6l2 2 3.8-3.9" fill="none" stroke="#fff" stroke-width="1.1"/></svg></div>
<div class="txt" style="left:213.1px;top:77.3px;font-size:11.5px;line-height:12px;color:#7A42F5;-webkit-text-stroke:0.2px currentColor">投放中计划数</div>
<div class="txt" style="left:10.0px;top:109.6px;font-size:11.5px;line-height:12px;color:#606266;-webkit-text-stroke:0.2px currentColor">自定义日期–推广数据</div>
<div class="abs" style="left:9.8px;top:134.4px;width:11px;height:11px"><svg width="11" height="11" viewBox="0 0 11 11"><rect width="11" height="11" rx="2" fill="#7040F8"/><path d="M2.6 5.6l2 2 3.8-3.9" fill="none" stroke="#fff" stroke-width="1.1"/></svg></div>
<div class="txt" style="left:27.3px;top:133.9px;font-size:11.5px;line-height:12px;color:#7A42F5;-webkit-text-stroke:0.2px currentColor">整体消耗</div>
<div class="abs" style="left:97.2px;top:134.4px;width:11px;height:11px"><svg width="11" height="11" viewBox="0 0 11 11"><rect width="11" height="11" rx="2" fill="#7040F8"/><path d="M2.6 5.6l2 2 3.8-3.9" fill="none" stroke="#fff" stroke-width="1.1"/></svg></div>
<div class="txt" style="left:114.7px;top:133.9px;font-size:11.5px;line-height:12px;color:#7A42F5;-webkit-text-stroke:0.2px currentColor">整体成交金额</div>
<div class="abs" style="left:207.3px;top:134.4px;width:11px;height:11px"><svg width="11" height="11" viewBox="0 0 11 11"><rect width="11" height="11" rx="2" fill="#7040F8"/><path d="M2.6 5.6l2 2 3.8-3.9" fill="none" stroke="#fff" stroke-width="1.1"/></svg></div>
<div class="txt" style="left:224.8px;top:133.9px;font-size:11.5px;line-height:12px;color:#7A42F5;-webkit-text-stroke:0.2px currentColor">整体支付ROI</div>
<div class="abs" style="left:313.7px;top:134.4px;width:11px;height:11px"><svg width="11" height="11" viewBox="0 0 11 11"><rect width="11" height="11" rx="2" fill="#7040F8"/><path d="M2.6 5.6l2 2 3.8-3.9" fill="none" stroke="#fff" stroke-width="1.1"/></svg></div>
<div class="txt" style="left:331.2px;top:133.9px;font-size:11.5px;line-height:12px;color:#7A42F5;-webkit-text-stroke:0.2px currentColor">整体成交订单数</div>
<div class="abs" style="left:435.2px;top:134.4px;width:11px;height:11px"><svg width="11" height="11" viewBox="0 0 11 11"><rect width="11" height="11" rx="2" fill="#7040F8"/><path d="M2.6 5.6l2 2 3.8-3.9" fill="none" stroke="#fff" stroke-width="1.1"/></svg></div>
<div class="txt" style="left:452.7px;top:133.9px;font-size:11.5px;line-height:12px;color:#7A42F5;-webkit-text-stroke:0.2px currentColor">整体成交订单成本</div>
<div class="abs" style="left:567.2px;top:134.4px;width:11px;height:11px"><svg width="11" height="11" viewBox="0 0 11 11"><rect width="11" height="11" rx="2" fill="#7040F8"/><path d="M2.6 5.6l2 2 3.8-3.9" fill="none" stroke="#fff" stroke-width="1.1"/></svg></div>
<div class="txt" style="left:584.7px;top:133.9px;font-size:11.5px;line-height:12px;color:#7A42F5;-webkit-text-stroke:0.2px currentColor">拍单利润(过滤售后)</div>
<div class="txt" style="left:10.0px;top:166.1px;font-size:11.5px;line-height:12px;color:#606266;-webkit-text-stroke:0.2px currentColor">今日–推广数据</div>
<div class="abs" style="left:9.8px;top:190.9px;width:11px;height:11px"><svg width="11" height="11" viewBox="0 0 11 11"><rect width="11" height="11" rx="2" fill="#7040F8"/><path d="M2.6 5.6l2 2 3.8-3.9" fill="none" stroke="#fff" stroke-width="1.1"/></svg></div>
<div class="txt" style="left:27.3px;top:190.4px;font-size:11.5px;line-height:12px;color:#7A42F5;-webkit-text-stroke:0.2px currentColor">整体消耗</div>
<div class="abs" style="left:97.2px;top:190.9px;width:11px;height:11px"><svg width="11" height="11" viewBox="0 0 11 11"><rect width="11" height="11" rx="2" fill="#7040F8"/><path d="M2.6 5.6l2 2 3.8-3.9" fill="none" stroke="#fff" stroke-width="1.1"/></svg></div>
<div class="txt" style="left:114.7px;top:190.4px;font-size:11.5px;line-height:12px;color:#7A42F5;-webkit-text-stroke:0.2px currentColor">整体成交金额</div>
<div class="abs" style="left:207.3px;top:190.9px;width:11px;height:11px"><svg width="11" height="11" viewBox="0 0 11 11"><rect width="11" height="11" rx="2" fill="#7040F8"/><path d="M2.6 5.6l2 2 3.8-3.9" fill="none" stroke="#fff" stroke-width="1.1"/></svg></div>
<div class="txt" style="left:224.8px;top:190.4px;font-size:11.5px;line-height:12px;color:#7A42F5;-webkit-text-stroke:0.2px currentColor">整体支付ROI</div>
<div class="abs" style="left:313.7px;top:190.9px;width:11px;height:11px"><svg width="11" height="11" viewBox="0 0 11 11"><rect width="11" height="11" rx="2" fill="#7040F8"/><path d="M2.6 5.6l2 2 3.8-3.9" fill="none" stroke="#fff" stroke-width="1.1"/></svg></div>
<div class="txt" style="left:331.2px;top:190.4px;font-size:11.5px;line-height:12px;color:#7A42F5;-webkit-text-stroke:0.2px currentColor">整体成交订单数</div>
<div class="abs" style="left:435.2px;top:190.9px;width:11px;height:11px"><svg width="11" height="11" viewBox="0 0 11 11"><rect width="11" height="11" rx="2" fill="#7040F8"/><path d="M2.6 5.6l2 2 3.8-3.9" fill="none" stroke="#fff" stroke-width="1.1"/></svg></div>
<div class="txt" style="left:452.7px;top:190.4px;font-size:11.5px;line-height:12px;color:#7A42F5;-webkit-text-stroke:0.2px currentColor">整体成交订单成本</div>
<div class="abs" style="left:567.2px;top:190.9px;width:11px;height:11px"><svg width="11" height="11" viewBox="0 0 11 11"><rect width="11" height="11" rx="2" fill="#7040F8"/><path d="M2.6 5.6l2 2 3.8-3.9" fill="none" stroke="#fff" stroke-width="1.1"/></svg></div>
<div class="txt" style="left:584.7px;top:190.4px;font-size:11.5px;line-height:12px;color:#7A42F5;-webkit-text-stroke:0.2px currentColor">拍单利润(过滤售后)</div>
<div class="txt" style="left:10.0px;top:222.6px;font-size:11.5px;line-height:12px;color:#606266;-webkit-text-stroke:0.2px currentColor">近7天–推广数据</div>
<div class="abs" style="left:9.8px;top:247.4px;width:11px;height:11px"><svg width="11" height="11" viewBox="0 0 11 11"><rect width="11" height="11" rx="2" fill="#7040F8"/><path d="M2.6 5.6l2 2 3.8-3.9" fill="none" stroke="#fff" stroke-width="1.1"/></svg></div>
<div class="txt" style="left:27.3px;top:246.9px;font-size:11.5px;line-height:12px;color:#7A42F5;-webkit-text-stroke:0.2px currentColor">整体消耗</div>
<div class="abs" style="left:97.2px;top:247.4px;width:11px;height:11px"><svg width="11" height="11" viewBox="0 0 11 11"><rect width="11" height="11" rx="2" fill="#7040F8"/><path d="M2.6 5.6l2 2 3.8-3.9" fill="none" stroke="#fff" stroke-width="1.1"/></svg></div>
<div class="txt" style="left:114.7px;top:246.9px;font-size:11.5px;line-height:12px;color:#7A42F5;-webkit-text-stroke:0.2px currentColor">整体成交金额</div>
<div class="abs" style="left:207.3px;top:247.4px;width:11px;height:11px"><svg width="11" height="11" viewBox="0 0 11 11"><rect width="11" height="11" rx="2" fill="#7040F8"/><path d="M2.6 5.6l2 2 3.8-3.9" fill="none" stroke="#fff" stroke-width="1.1"/></svg></div>
<div class="txt" style="left:224.8px;top:246.9px;font-size:11.5px;line-height:12px;color:#7A42F5;-webkit-text-stroke:0.2px currentColor">整体支付ROI</div>
<div class="abs" style="left:313.7px;top:247.4px;width:11px;height:11px"><svg width="11" height="11" viewBox="0 0 11 11"><rect width="11" height="11" rx="2" fill="#7040F8"/><path d="M2.6 5.6l2 2 3.8-3.9" fill="none" stroke="#fff" stroke-width="1.1"/></svg></div>
<div class="txt" style="left:331.2px;top:246.9px;font-size:11.5px;line-height:12px;color:#7A42F5;-webkit-text-stroke:0.2px currentColor">整体成交订单数</div>
<div class="abs" style="left:435.2px;top:247.4px;width:11px;height:11px"><svg width="11" height="11" viewBox="0 0 11 11"><rect width="11" height="11" rx="2" fill="#7040F8"/><path d="M2.6 5.6l2 2 3.8-3.9" fill="none" stroke="#fff" stroke-width="1.1"/></svg></div>
<div class="txt" style="left:452.7px;top:246.9px;font-size:11.5px;line-height:12px;color:#7A42F5;-webkit-text-stroke:0.2px currentColor">整体成交订单成本</div>
<div class="abs" style="left:567.2px;top:247.4px;width:11px;height:11px"><svg width="11" height="11" viewBox="0 0 11 11"><rect width="11" height="11" rx="2" fill="#7040F8"/><path d="M2.6 5.6l2 2 3.8-3.9" fill="none" stroke="#fff" stroke-width="1.1"/></svg></div>
<div class="txt" style="left:584.7px;top:246.9px;font-size:11.5px;line-height:12px;color:#7A42F5;-webkit-text-stroke:0.2px currentColor">拍单利润(过滤售后)</div>
<div class="txt" style="left:10.0px;top:279.2px;font-size:11.5px;line-height:12px;color:#606266;-webkit-text-stroke:0.2px currentColor">近30天–推广数据</div>
<div class="abs" style="left:9.8px;top:304.0px;width:11px;height:11px"><svg width="11" height="11" viewBox="0 0 11 11"><rect width="11" height="11" rx="2" fill="#7040F8"/><path d="M2.6 5.6l2 2 3.8-3.9" fill="none" stroke="#fff" stroke-width="1.1"/></svg></div>
<div class="txt" style="left:27.3px;top:303.5px;font-size:11.5px;line-height:12px;color:#7A42F5;-webkit-text-stroke:0.2px currentColor">整体消耗</div>
<div class="abs" style="left:97.2px;top:304.0px;width:11px;height:11px"><svg width="11" height="11" viewBox="0 0 11 11"><rect width="11" height="11" rx="2" fill="#7040F8"/><path d="M2.6 5.6l2 2 3.8-3.9" fill="none" stroke="#fff" stroke-width="1.1"/></svg></div>
<div class="txt" style="left:114.7px;top:303.5px;font-size:11.5px;line-height:12px;color:#7A42F5;-webkit-text-stroke:0.2px currentColor">整体成交金额</div>
<div class="abs" style="left:207.3px;top:304.0px;width:11px;height:11px"><svg width="11" height="11" viewBox="0 0 11 11"><rect width="11" height="11" rx="2" fill="#7040F8"/><path d="M2.6 5.6l2 2 3.8-3.9" fill="none" stroke="#fff" stroke-width="1.1"/></svg></div>
<div class="txt" style="left:224.8px;top:303.5px;font-size:11.5px;line-height:12px;color:#7A42F5;-webkit-text-stroke:0.2px currentColor">整体支付ROI</div>
<div class="abs" style="left:313.7px;top:304.0px;width:11px;height:11px"><svg width="11" height="11" viewBox="0 0 11 11"><rect width="11" height="11" rx="2" fill="#7040F8"/><path d="M2.6 5.6l2 2 3.8-3.9" fill="none" stroke="#fff" stroke-width="1.1"/></svg></div>
<div class="txt" style="left:331.2px;top:303.5px;font-size:11.5px;line-height:12px;color:#7A42F5;-webkit-text-stroke:0.2px currentColor">整体成交订单数</div>
<div class="abs" style="left:435.2px;top:304.0px;width:11px;height:11px"><svg width="11" height="11" viewBox="0 0 11 11"><rect width="11" height="11" rx="2" fill="#7040F8"/><path d="M2.6 5.6l2 2 3.8-3.9" fill="none" stroke="#fff" stroke-width="1.1"/></svg></div>
<div class="txt" style="left:452.7px;top:303.5px;font-size:11.5px;line-height:12px;color:#7A42F5;-webkit-text-stroke:0.2px currentColor">整体成交订单成本</div>
<div class="abs" style="left:567.2px;top:304.0px;width:11px;height:11px"><svg width="11" height="11" viewBox="0 0 11 11"><rect width="11" height="11" rx="2" fill="#7040F8"/><path d="M2.6 5.6l2 2 3.8-3.9" fill="none" stroke="#fff" stroke-width="1.1"/></svg></div>
<div class="txt" style="left:584.7px;top:303.5px;font-size:11.5px;line-height:12px;color:#7A42F5;-webkit-text-stroke:0.2px currentColor">拍单利润(过滤售后)</div>
<div class="txt" style="left:19.0px;top:347.0px;font-size:11.5px;line-height:12px;color:#7A42F5;-webkit-text-stroke:0.2px currentColor">全选</div>
<div class="txt" style="left:59.4px;top:347.0px;font-size:11.5px;line-height:12px;color:#7A42F5;-webkit-text-stroke:0.2px currentColor">反选</div>
<div class="abs" style="left:666.0px;top:374.0px;width:58px;height:29px;border:1px solid #DCDFE6;border-radius:4px;background:#fff"><div class="txt" style="left:14px;top:8px;font-size:11.5px;line-height:12px;color:#303133;letter-spacing:4px;-webkit-text-stroke:0.2px currentColor">取消</div></div>
<div class="abs" style="left:734.0px;top:374.0px;width:58px;height:29px;border-radius:4px;background:#7040F8"><div class="txt" style="left:14px;top:8px;font-size:11.5px;line-height:12px;color:#fff;letter-spacing:4px;font-weight:700">保存</div></div>
</div></div><!--dlgend-->
</body>
</html>
